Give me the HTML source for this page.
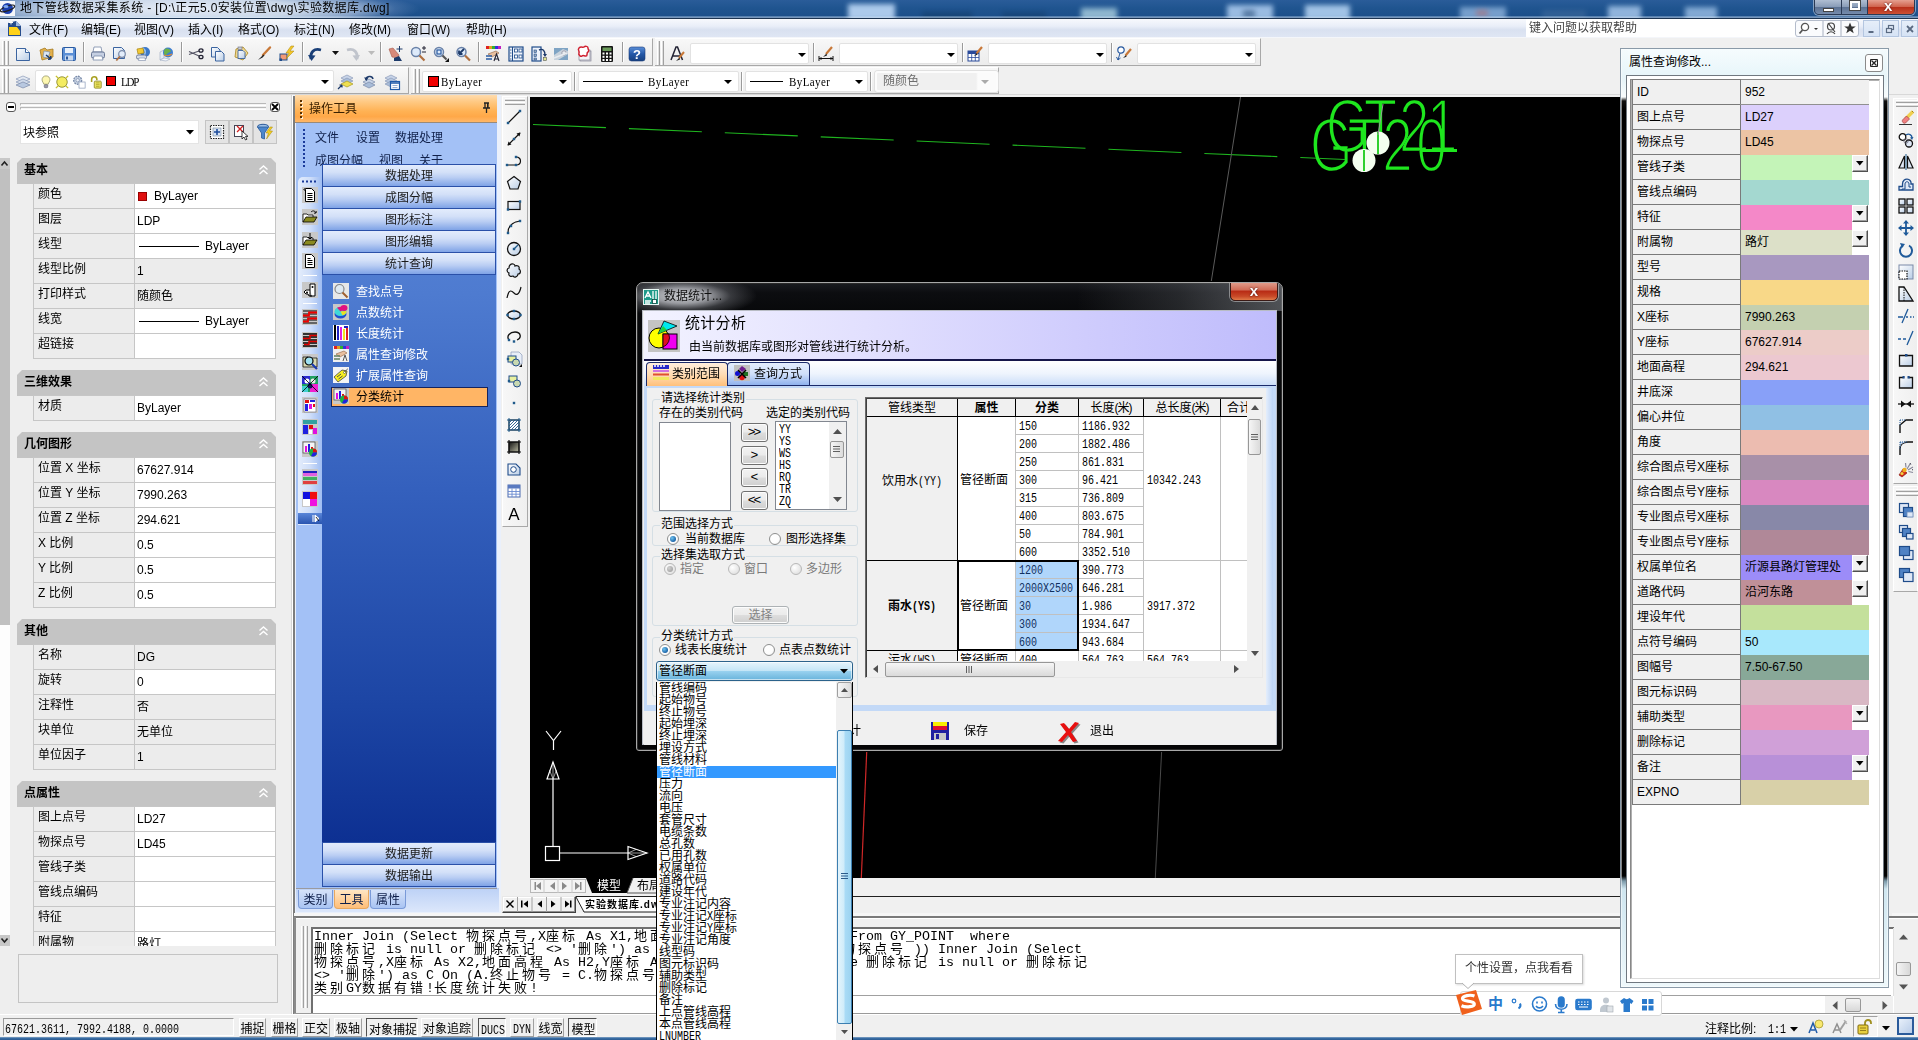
<!DOCTYPE html>
<html lang="zh-CN"><head><meta charset="utf-8"><title>地下管线数据采集系统</title>
<style>
*{box-sizing:border-box;margin:0;padding:0}
html,body{width:1918px;height:1040px;overflow:hidden;background:#f0f0f0}
body{font-family:"Liberation Sans","Noto Sans CJK SC",sans-serif;font-size:12px;color:#000;position:relative;line-height:1}
.a{position:absolute}
.t{position:absolute;white-space:nowrap;line-height:14px;height:14px}
.mono{font-family:"Liberation Mono","Noto Sans CJK SC",monospace}
.ser{font-family:"Liberation Serif","Noto Serif CJK SC",serif}
svg{position:absolute;overflow:visible}

.cmd{white-space:pre;font-family:"Liberation Mono","Noto Sans CJK SC",monospace;font-size:13.33px;line-height:13px;height:13px;color:#000}
.sss{font-family:"Liberation Serif",serif;font-size:11px;letter-spacing:.4px;transform:scale(1,1.12);transform-origin:0 60%}
.ssl{font-family:"Liberation Mono",monospace;font-size:10px;display:inline-block;transform:scale(1,1.2);transform-origin:0 60%;letter-spacing:0}
</style></head>
<body>
<svg width="0" height="0" style="position:absolute"><defs><linearGradient id="gdoc" x1="0" y1="0" x2="1" y2="1"><stop offset="0" stop-color="#ffffff"/><stop offset="1" stop-color="#b9cde6"/></linearGradient><linearGradient id="ghelp" x1="0" y1="0" x2="0" y2="1"><stop offset="0" stop-color="#5b8fd8"/><stop offset=".5" stop-color="#2458a8"/><stop offset="1" stop-color="#17407f"/></linearGradient></defs></svg>
<div class="a" id="titlebar" style="left:0;top:0;width:1918px;height:19px;background:linear-gradient(180deg,#2a5c99 0%,#1f548f 45%,#1b4d88 100%);overflow:hidden">
<div class="a" style="left:-60px;top:-10px;width:480px;height:38px;background:radial-gradient(ellipse 50% 60% at 50% 50%,rgba(236,241,250,.96) 0%,rgba(215,225,240,.92) 50%,rgba(170,190,220,.75) 75%,rgba(100,135,185,.4) 90%,rgba(40,90,150,0) 100%)"></div>
<div class="a" style="left:848px;top:4px;width:47px;height:16px;background:#b4d1f1;filter:blur(2.500px);opacity:0.95"></div>
<div class="a" style="left:922px;top:12px;width:50px;height:8px;background:#15406f;filter:blur(2.500px);opacity:0.7"></div>
<div class="a" style="left:1002px;top:12px;width:44px;height:8px;background:#15406f;filter:blur(2.500px);opacity:0.6"></div>
<div class="a" style="left:1081px;top:8px;width:36px;height:12px;background:#a3c9dc;filter:blur(2.500px);opacity:0.85"></div>
<div class="a" style="left:1227px;top:5px;width:46px;height:15px;background:#a8c8ec;filter:blur(2.500px);opacity:0.9"></div>
<div class="a" style="left:1243px;top:10px;width:12px;height:8px;background:#3a5f8a;filter:blur(2.500px);opacity:0.7"></div>
<div class="a" style="left:1305px;top:5px;width:45px;height:15px;background:#b0d0f0;filter:blur(2.500px);opacity:0.9"></div>
<div class="a" style="left:1460px;top:7px;width:46px;height:13px;background:#8db2dc;filter:blur(2.500px);opacity:0.8"></div>
<div class="a" style="left:1476px;top:10px;width:12px;height:6px;background:#b06a70;filter:blur(2.500px);opacity:0.6"></div>
<div class="a" style="left:1542px;top:10px;width:44px;height:9px;background:#3f6a9c;filter:blur(2.500px);opacity:0.6"></div>
<div class="a" style="left:1608px;top:6px;width:33px;height:14px;background:#a5c6ea;filter:blur(2.500px);opacity:0.85"></div>
<div class="a" style="left:1685px;top:7px;width:32px;height:13px;background:#9cc0e6;filter:blur(2.500px);opacity:0.8"></div>
<svg style="left:0;top:1px" width="16" height="15" viewBox="0 0 16 15"><rect x="0" y="0" width="15" height="15" fill="#f4f6fa"/><ellipse cx="7.5" cy="7.5" rx="5.5" ry="5.5" fill="#1a3fae"/><ellipse cx="7.5" cy="7.5" rx="7.5" ry="2.2" fill="none" stroke="#222" stroke-width="1.3" transform="rotate(-20 7.5 7.5)"/><ellipse cx="6" cy="5.5" rx="2.5" ry="1.6" fill="#7fa8f0"/></svg>
<div class="t" style="left:20px;top:1px;font-size:12px;line-height:15px;height:15px;color:#000;letter-spacing:.35px">地下管线数据采集系统 - [D:\正元5.0安装位置\dwg\实验数据库.dwg]</div>
<div class="a" style="left:1814px;top:-2px;width:101px;height:17px;border:1px solid #2a3a55;border-radius:0 0 5px 5px;box-shadow:0 0 0 1px rgba(255,255,255,.45);overflow:hidden"><div class="a" style="left:0;top:0;width:27px;height:17px;background:linear-gradient(180deg,#b5c3d6 0%,#8a9db8 45%,#5d7394 50%,#7d93b3 100%);border-right:1px solid #2a3a55"></div><div class="a" style="left:27px;top:0;width:26px;height:17px;background:linear-gradient(180deg,#b5c3d6 0%,#8a9db8 45%,#5d7394 50%,#7d93b3 100%);border-right:1px solid #2a3a55"></div><div class="a" style="left:53px;top:0;width:48px;height:17px;background:linear-gradient(180deg,#e8a99a 0%,#d0644e 45%,#b8301a 50%,#d25a3c 100%)"></div><div class="a" style="left:8px;top:9px;width:11px;height:4px;background:#fff;border:1px solid #444"></div><div class="a" style="left:35px;top:2px;width:10px;height:9px;border:2px solid #fff;outline:1px solid #444"></div><div class="t" style="left:69px;top:0px;font-weight:bold;font-size:15px;color:#fff;text-shadow:0 0 2px #400;line-height:14px">x</div></div>
<div class="a" style="left:0;top:16px;width:1918px;height:1px;background:rgba(200,225,245,.35)"></div><div class="a" style="left:0;top:17px;width:1918px;height:1px;background:rgba(230,240,250,.45)"></div><div class="a" style="left:0;top:18px;width:1918px;height:1px;background:#1b3350"></div>
</div>
<div class="a" id="menubar" style="left:0;top:19px;width:1918px;height:19px;background:linear-gradient(180deg,#f7f9fd 0%,#e9eef8 40%,#d9e1f0 60%,#dfe6f4 100%);border-bottom:1px solid #f4f6fa">
<svg style="left:7px;top:1px" width="15" height="17" viewBox="0 0 15 17"><path d="M1 3 L9 1 L14 6 L14 16 L1 16 Z" fill="#274d8c"/><path d="M2 7 L10 7 L13 11 L13 15 L2 15 Z" fill="#ffd21a"/><path d="M9 1 L14 6 L9 6Z" fill="#9bb6e0"/><path d="M2 2.5h4M4 .5v4" stroke="#fff" stroke-width="1"/></svg>
<div class="t" style="left:29px;top:4px">文件(F)</div>
<div class="t" style="left:81px;top:4px">编辑(E)</div>
<div class="t" style="left:134px;top:4px">视图(V)</div>
<div class="t" style="left:188px;top:4px">插入(I)</div>
<div class="t" style="left:238px;top:4px">格式(O)</div>
<div class="t" style="left:294px;top:4px">标注(N)</div>
<div class="t" style="left:349px;top:4px">修改(M)</div>
<div class="t" style="left:407px;top:4px">窗口(W)</div>
<div class="t" style="left:466px;top:4px">帮助(H)</div>
<div class="a" style="left:1526px;top:0px;width:270px;height:18px;background:#fff"></div>
<div class="t" style="left:1529px;top:2px;color:#444">键入问题以获取帮助</div>
<div class="a" style="left:1795px;top:1px;width:64px;height:17px;background:#fafbfd;border:1px solid #b4bccb;border-radius:3px"></div>
<svg style="left:1797px;top:2px" width="62" height="16" viewBox="0 0 62 16"><circle cx="8" cy="6" r="3.6" fill="#fff" stroke="#555" stroke-width="1.3"/><path d="M5.5 9 L2.5 12.5" stroke="#555" stroke-width="1.8"/><path d="M17 7h4l-2 2z" fill="#333"/><path d="M26 0v15M44 0v15" stroke="#a8b0c0" stroke-width="1"/><circle cx="34" cy="5.5" r="3.5" fill="none" stroke="#444" stroke-width="1.2"/><path d="M30 13c2-3 6-3 8 0M31 2l7 9" stroke="#444" stroke-width="1.2" fill="none"/><path d="M53 1.5l1.6 4h4.2l-3.4 2.6 1.3 4.2-3.7-2.6-3.7 2.6 1.3-4.2-3.4-2.6h4.2z" fill="#333"/></svg>
<div class="a" style="left:1863px;top:1px;width:17px;height:17px;background:linear-gradient(180deg,#e6eef9,#d6e3f5);border:1px solid #b4c6e0"></div>
<div class="a" style="left:1882px;top:1px;width:17px;height:17px;background:linear-gradient(180deg,#e6eef9,#d6e3f5);border:1px solid #b4c6e0"></div>
<div class="a" style="left:1901px;top:1px;width:17px;height:17px;background:linear-gradient(180deg,#e6eef9,#d6e3f5);border:1px solid #b4c6e0"></div>
<svg style="left:1863px;top:1px" width="56" height="17" viewBox="0 0 56 17"><path d="M5.500 12h5" stroke="#5a6a82" stroke-width="2"/><rect x="25.500" y="5.500" width="5" height="4" fill="none" stroke="#5a6a82" stroke-width="1.200"/><rect x="23.500" y="8.500" width="5" height="4" fill="#dfe8f6" stroke="#5a6a82" stroke-width="1.200"/><path d="M44 6l6 6M50 6l-6 6" stroke="#5a6a82" stroke-width="1.800"/></svg>
</div>
<div class="a" style="left:0;top:38px;width:1918px;height:57px;background:#f0f0f0"></div>
<div class="a" style="left:0px;top:38px;width:653px;height:28px;background:linear-gradient(180deg,#f8f8f8 0%,#f1f1f1 50%,#ececec 100%);border-top:1px solid #fff;border-bottom:1px solid #a8a8a8;border-right:1px solid #a8a8a8"></div>
<div class="a" style="left:2px;top:41px;width:3px;height:24px;border-left:1px solid #fff;border-right:1px solid #a0a0a0;background:#e0e0e0"></div><div class="a" style="left:6px;top:41px;width:3px;height:24px;border-left:1px solid #fff;border-right:1px solid #a0a0a0;background:#e0e0e0"></div>
<svg style="left:15px;top:45.5px" width="16" height="16" viewBox="0 0 16 16"><path d="M1.500 2.500h9l4 4v8h-13z" fill="url(#gdoc)" stroke="#3b64a0"/><path d="M10.500 2.500v4h4" fill="#fff" stroke="#3b64a0"/></svg>
<svg style="left:39px;top:45.5px" width="16" height="16" viewBox="0 0 16 16"><path d="M1 4l5-2 2 2 6-1v8l-11 3z" fill="#e3b04b" stroke="#a57a20" stroke-width=".8"/><path d="M5 5l6 1-2 6-5-1z" fill="#dbe6f2" stroke="#6b87a8" stroke-width=".6"/><path d="M7 9l5 4M12 13l-3 .3M12 13l-.3-3" stroke="#1d3a6a" stroke-width="1.5" fill="none"/></svg>
<svg style="left:61px;top:45.5px" width="16" height="16" viewBox="0 0 16 16"><rect x="1.500" y="1.500" width="13" height="13" rx="1" fill="#5b8fd6" stroke="#2a5aa0"/><rect x="4" y="2" width="8" height="5" fill="#e8f0fa"/><rect x="4" y="9.500" width="8" height="5" fill="#c8d8ee"/><rect x="5" y="10.500" width="2" height="3" fill="#2a5aa0"/></svg>
<div class="a" style="left:83px;top:42px;width:2px;height:20px;border-left:1px solid #9a9a9a;border-right:1px solid #fff"></div>
<svg style="left:90px;top:45.5px" width="16" height="16" viewBox="0 0 16 16"><path d="M4 1h7l1 5H3z" fill="#fff" stroke="#7a8aa8" stroke-width=".8"/><rect x="1.500" y="6" width="13" height="6" rx="1.500" fill="#c5cfe2" stroke="#5a6a8a" stroke-width=".9"/><path d="M4 10h8l1 4H3z" fill="#fff" stroke="#7a8aa8" stroke-width=".8"/></svg>
<svg style="left:112px;top:45.5px" width="16" height="16" viewBox="0 0 16 16"><path d="M1.500 1.500h8l3 3v8h-11z" fill="url(#gdoc)" stroke="#3b64a0"/><circle cx="10" cy="8" r="3.300" fill="#e4eefb" stroke="#7a8aa8" stroke-width="1.200"/><path d="M7.800 10.500l-3.500 4" stroke="#b07040" stroke-width="1.800"/></svg>
<svg style="left:135px;top:45.5px" width="16" height="16" viewBox="0 0 16 16"><circle cx="10" cy="6" r="5" fill="#3c78c8"/><path d="M8 2c3 2 3 6 0 9" fill="none" stroke="#9cc4f0" stroke-width="1.500"/><path d="M2 3l6-1 1 5-6 1z" fill="#f2c834" stroke="#a88410" stroke-width=".7"/><rect x="1.500" y="9" width="10" height="4" rx="1.500" fill="#d5dcea" stroke="#5a6a8a" stroke-width=".8"/><path d="M4 12h6l.5 2.500h-7z" fill="#fff" stroke="#7a8aa8" stroke-width=".6"/></svg>
<svg style="left:158px;top:45.5px" width="16" height="16" viewBox="0 0 16 16"><path d="M2 6l4-2v8l-4 2z" fill="#e6ecf5" stroke="#9aa8c0" stroke-width=".6"/><path d="M2 14l4-2 6 1-4 2z" fill="#f4f6fa" stroke="#9aa8c0" stroke-width=".6"/><circle cx="10" cy="6.500" r="5" fill="#3f7fd0"/><path d="M7 3c2-1 5 0 6 2-1 2-3 1-4 3s-3 1-3-1 0-3 1-4z" fill="#6bb04a"/><path d="M6 9c2 1 5 1 8-1" stroke="#e0883a" stroke-width="1.200" fill="none"/></svg>
<div class="a" style="left:181px;top:42px;width:2px;height:20px;border-left:1px solid #9a9a9a;border-right:1px solid #fff"></div>
<svg style="left:188px;top:45.5px" width="16" height="16" viewBox="0 0 16 16"><path d="M1 5.500l10 4.500M1 8.500l10-3.500" stroke="#556" stroke-width="1.100"/><ellipse cx="13" cy="4.500" rx="2" ry="1.700" fill="none" stroke="#223" stroke-width="1.300"/><ellipse cx="13" cy="11" rx="2" ry="1.700" fill="none" stroke="#223" stroke-width="1.300"/></svg>
<svg style="left:210px;top:45.5px" width="16" height="16" viewBox="0 0 16 16"><path d="M1.500 1.500h6l2.500 2.500v7h-8.500z" fill="url(#gdoc)" stroke="#3b64a0"/><path d="M5.500 5.500h6l2.500 2.500v7h-8.500z" fill="url(#gdoc)" stroke="#3b64a0"/></svg>
<svg style="left:233px;top:45.5px" width="16" height="16" viewBox="0 0 16 16"><path d="M3 3l7-2 5 6-5 7-8-3z" fill="#f0d890" stroke="#b09030" stroke-width=".9"/><path d="M5 4.500h5l2 2v6H5z" fill="url(#gdoc)" stroke="#3b64a0" stroke-width=".9"/><rect x="5" y="1" width="4" height="2.500" fill="#c8d0dc" stroke="#667" stroke-width=".6"/></svg>
<svg style="left:256px;top:45.5px" width="16" height="16" viewBox="0 0 16 16"><path d="M14 1.500L7 9" stroke="#c87838" stroke-width="2.400" stroke-linecap="round"/><path d="M7.500 8.500L2 14l4.500-2.500 2-2z" fill="#222"/></svg>
<svg style="left:279px;top:45.5px" width="16" height="16" viewBox="0 0 16 16"><rect x="1" y="8" width="7" height="6" fill="#f29a76" stroke="#1f4c8a" stroke-width="1"/><rect x=".5" y="12.500" width="2.500" height="2.500" fill="#1f4c8a"/><path d="M12 0l-5 7h3l-3 6 8-8h-4l4-5z" fill="#f5c828" stroke="#a88410" stroke-width=".5"/></svg>
<div class="a" style="left:302px;top:42px;width:2px;height:20px;border-left:1px solid #9a9a9a;border-right:1px solid #fff"></div>
<svg style="left:308px;top:45.5px" width="16" height="16" viewBox="0 0 16 16"><path d="M3 13c-1-7 3-11 10-9" fill="none" stroke="#1a3f78" stroke-width="2.800"/><path d="M0 9l3.500 6 4-5.500z" fill="#1a3f78"/></svg>
<svg style="left:332px;top:51px" width="7" height="4" viewBox="0 0 7 4"><path d="M0 0h7l-3.5 4z" fill="#111"/></svg>
<svg style="left:344px;top:45.5px" width="16" height="16" viewBox="0 0 16 16"><path d="M13 13c1-7-3-11-10-9" fill="none" stroke="#c0c4cc" stroke-width="2.800" transform="translate(0,0)"/><path d="M16 9l-3.500 6-4-5.500z" fill="#c0c4cc"/></svg>
<svg style="left:368px;top:51px" width="7" height="4" viewBox="0 0 7 4"><path d="M0 0h7l-3.5 4z" fill="#bbb"/></svg>
<div class="a" style="left:380px;top:42px;width:2px;height:20px;border-left:1px solid #9a9a9a;border-right:1px solid #fff"></div>
<svg style="left:387px;top:45.5px" width="16" height="16" viewBox="0 0 16 16"><path d="M2 3l3 8 6 1 1-3-6-7z" fill="#d88a7a" stroke="#a85a4a" stroke-width=".6"/><path d="M7 12l5-2 3 5H7z" fill="#1d3a6a"/><path d="M12.500 0v6M9.500 3h6" stroke="#1d3a6a" stroke-width="1"/></svg>
<svg style="left:410px;top:45.5px" width="16" height="16" viewBox="0 0 16 16"><circle cx="6" cy="6" r="4.500" fill="#ddeafa" stroke="#6a82a8" stroke-width="1.500"/><path d="M9.500 9.500l5 5" stroke="#b07040" stroke-width="2.200"/><path d="M12 2h4M14 0v4M12 6h4" stroke="#223" stroke-width="1"/></svg>
<svg style="left:433px;top:45.5px" width="16" height="16" viewBox="0 0 16 16"><circle cx="6" cy="6" r="4.500" fill="#ddeafa" stroke="#6a82a8" stroke-width="1.500"/><rect x="4" y="4" width="4" height="4" fill="none" stroke="#2a5aa0" stroke-width="1.200"/><path d="M9.500 9.500l4 4" stroke="#555" stroke-width="2.200"/><path d="M16 12v4h-4z" fill="#111"/></svg>
<svg style="left:455px;top:45.5px" width="16" height="16" viewBox="0 0 16 16"><circle cx="6.500" cy="6" r="4.500" fill="#ddeafa" stroke="#6a82a8" stroke-width="1.500"/><path d="M4 8l5-5M4 8V4.500M4 8h3.500" stroke="#1d3a6a" stroke-width="1.800" fill="none"/><path d="M10 9.500l5 5" stroke="#b07040" stroke-width="2.200"/></svg>
<div class="a" style="left:478px;top:42px;width:2px;height:20px;border-left:1px solid #9a9a9a;border-right:1px solid #fff"></div>
<svg style="left:485px;top:45.5px" width="16" height="16" viewBox="0 0 16 16"><rect x="1" y="0" width="3" height="3" fill="#e02020"/><rect x="4" y="0" width="3" height="3" fill="#e0a020"/><rect x="7" y="0" width="3" height="3" fill="#30b030"/><rect x="10" y="0" width="3" height="3" fill="#3030e0"/><rect x="13" y="0" width="3" height="3" fill="#c020c0"/><path d="M3 8l8-3 3 2-7 4z" fill="#e8c0a0" stroke="#906040" stroke-width=".6"/><path d="M1 10h6M1 13h6" stroke="#2a5aa0" stroke-width="1.400"/><path d="M9 15l2.500-7 2.500 7M10 13h3" stroke="#223" stroke-width="1.100" fill="none"/></svg>
<svg style="left:508px;top:45.5px" width="16" height="16" viewBox="0 0 16 16"><rect x="1" y="1" width="14" height="14" fill="#eef3fb" stroke="#1f4c8a" stroke-width="1.200"/><path d="M4.500 1v14" stroke="#1f4c8a" stroke-width="1"/><rect x="6.500" y="3" width="3" height="3" fill="#fff" stroke="#1f4c8a" stroke-width=".8"/><rect x="11" y="3" width="3" height="3" fill="#fff" stroke="#1f4c8a" stroke-width=".8"/><rect x="6.500" y="9" width="3" height="3" fill="#fff" stroke="#1f4c8a" stroke-width=".8"/><rect x="11" y="9" width="3" height="3" fill="#fff" stroke="#1f4c8a" stroke-width=".8"/><path d="M2 4h1.500M2 7h1.500M2 10h1.500M2 13h1.500" stroke="#1f4c8a" stroke-width=".8"/></svg>
<svg style="left:531px;top:45.5px" width="16" height="16" viewBox="0 0 16 16"><rect x="1" y="1" width="9" height="14" fill="#eef3fb" stroke="#1f4c8a" stroke-width="1.200"/><rect x="3" y="4" width="2.500" height="2.500" fill="#9ab" stroke="#1f4c8a" stroke-width=".6"/><rect x="3" y="8" width="2.500" height="2.500" fill="#9ab" stroke="#1f4c8a" stroke-width=".6"/><rect x="3" y="12" width="2.500" height="2" fill="#9ab" stroke="#1f4c8a" stroke-width=".6"/><path d="M8 4c4-2 6 1 6 5" stroke="#1d3a6a" stroke-width="1.400" fill="none"/><path d="M12 8h4l-2 3z" fill="#1d3a6a"/><rect x="12.500" y="11.500" width="3" height="3" fill="#dfe890" stroke="#555" stroke-width=".6"/></svg>
<svg style="left:553px;top:45.5px" width="16" height="16" viewBox="0 0 16 16"><rect x="1" y="2" width="14" height="12" fill="#7fa4c4"/><path d="M1 9l9-6 5 2v3L5 14H1z" fill="#c8d2dc"/><circle cx="11" cy="7" r="2.200" fill="#e8ecf0" stroke="#889" stroke-width=".7"/><path d="M1 12l13-5" stroke="#e8ecf0" stroke-width="1.500"/></svg>
<svg style="left:576px;top:45.5px" width="16" height="16" viewBox="0 0 16 16"><rect x="4" y="5" width="11" height="10" fill="#e4e4e8" stroke="#889" stroke-width=".7"/><rect x="3" y="4" width="11" height="10" fill="#f4f4f8" stroke="#889" stroke-width=".7"/><path d="M3 2c2-2 4 0 5-1s4-1 4 1 2 3 0 4 0 4-2 4-3-1-4 0-4-1-3-3-2-3 0-5z" fill="#fff" stroke="#d02030" stroke-width="1.500"/></svg>
<svg style="left:599px;top:45.5px" width="16" height="16" viewBox="0 0 16 16"><rect x="2" y="0" width="12" height="16" rx="1" fill="#151515"/><rect x="3.500" y="1.500" width="9" height="3.500" fill="#6a9a5a"/><g fill="#fff"><rect x="3.500" y="6.500" width="2" height="2"/><rect x="7" y="6.500" width="2" height="2"/><rect x="10.500" y="6.500" width="2" height="2"/><rect x="3.500" y="9.800" width="2" height="2"/><rect x="7" y="9.800" width="2" height="2"/><rect x="10.500" y="9.800" width="2" height="2"/><rect x="3.500" y="13" width="2" height="2"/><rect x="7" y="13" width="2" height="2"/><rect x="10.500" y="13" width="2" height="2"/></g></svg>
<div class="a" style="left:622px;top:42px;width:2px;height:20px;border-left:1px solid #9a9a9a;border-right:1px solid #fff"></div>
<svg style="left:629px;top:45.5px" width="16" height="16" viewBox="0 0 16 16"><rect x="0" y="1" width="16" height="14" rx="2.500" fill="url(#ghelp)" stroke="#173a78" stroke-width=".6"/><text x="8" y="13" font-size="13" font-weight="bold" fill="#fff" text-anchor="middle" font-family="Liberation Sans,sans-serif">?</text></svg>
<div class="a" style="left:655px;top:38px;width:606px;height:28px;background:linear-gradient(180deg,#f8f8f8 0%,#f1f1f1 50%,#ececec 100%);border-top:1px solid #fff;border-bottom:1px solid #a8a8a8;border-right:1px solid #a8a8a8"></div>
<div class="a" style="left:657px;top:41px;width:3px;height:24px;border-left:1px solid #fff;border-right:1px solid #a0a0a0;background:#e0e0e0"></div><div class="a" style="left:661px;top:41px;width:3px;height:24px;border-left:1px solid #fff;border-right:1px solid #a0a0a0;background:#e0e0e0"></div>
<svg style="left:669px;top:45.5px" width="16" height="16" viewBox="0 0 16 16"><path d="M2 14L7 1h1.500l5 13M4 10h8" stroke="#223" stroke-width="1.500" fill="none"/><path d="M15 6l-5 6" stroke="#c87838" stroke-width="2"/><path d="M10.500 11.500L7 15l4-1.500z" fill="#222"/></svg>
<div class="a" style="left:690px;top:43px;width:119px;height:21px;background:#fff;border:1px solid #e2e2e2;border-radius:2px"></div>
<svg style="left:798px;top:53px" width="8" height="4" viewBox="0 0 8 4"><path d="M0 0h8l-4.0 4z" fill="#000"/></svg>
<div class="a" style="left:813px;top:43px;width:2px;height:19px;border-left:1px solid #9a9a9a;border-right:1px solid #fff"></div>
<svg style="left:818px;top:45.5px" width="16" height="16" viewBox="0 0 16 16"><path d="M1 10v5M15 10v5M1 12.500h14" stroke="#111" stroke-width="1"/><path d="M1 12.500l2.500-1.500v3zM15 12.500l-2.500-1.500v3z" fill="#111"/><path d="M14 1L8 8" stroke="#c87838" stroke-width="2.200"/><path d="M8.500 7.500L5 11l4-1.500z" fill="#222"/></svg>
<div class="a" style="left:839px;top:43px;width:119px;height:21px;background:#fff;border:1px solid #e2e2e2;border-radius:2px"></div>
<svg style="left:947px;top:53px" width="8" height="4" viewBox="0 0 8 4"><path d="M0 0h8l-4.0 4z" fill="#000"/></svg>
<div class="a" style="left:962px;top:43px;width:2px;height:19px;border-left:1px solid #9a9a9a;border-right:1px solid #fff"></div>
<svg style="left:967px;top:45.5px" width="16" height="16" viewBox="0 0 16 16"><rect x="1" y="5" width="11" height="10" fill="#fff" stroke="#2a4a9a" stroke-width="1"/><rect x="1" y="5" width="11" height="3" fill="#2a4a9a"/><path d="M1 11.500h11M4.700 8v7M8.300 8v7" stroke="#2a4a9a" stroke-width=".8"/><path d="M15 1L9.500 7.500" stroke="#c87838" stroke-width="2.200"/><path d="M10 7L7 10l3.500-1.200z" fill="#222"/></svg>
<div class="a" style="left:988px;top:43px;width:119px;height:21px;background:#fff;border:1px solid #e2e2e2;border-radius:2px"></div>
<svg style="left:1096px;top:53px" width="8" height="4" viewBox="0 0 8 4"><path d="M0 0h8l-4.0 4z" fill="#000"/></svg>
<div class="a" style="left:1111px;top:43px;width:2px;height:19px;border-left:1px solid #9a9a9a;border-right:1px solid #fff"></div>
<svg style="left:1116px;top:45.5px" width="16" height="16" viewBox="0 0 16 16"><circle cx="5" cy="4" r="3.200" fill="#fff" stroke="#2a5aa0" stroke-width="1.200"/><path d="M4 7l-2 7M2 14l-1.500-3M2 14l2.500-2" stroke="#2a5aa0" stroke-width="1" fill="none"/><path d="M15 3L9.500 9.500" stroke="#c87838" stroke-width="2.200"/><path d="M10 9L7 12l3.500-1.200z" fill="#222"/></svg>
<div class="a" style="left:1137px;top:43px;width:119px;height:21px;background:#fff;border:1px solid #e2e2e2;border-radius:2px"></div>
<svg style="left:1245px;top:53px" width="8" height="4" viewBox="0 0 8 4"><path d="M0 0h8l-4.0 4z" fill="#000"/></svg>
<div class="a" style="left:0px;top:67px;width:409px;height:27px;background:linear-gradient(180deg,#f8f8f8 0%,#f1f1f1 50%,#ececec 100%);border-top:1px solid #fff;border-bottom:1px solid #a8a8a8;border-right:1px solid #a8a8a8"></div>
<div class="a" style="left:2px;top:69px;width:3px;height:24px;border-left:1px solid #fff;border-right:1px solid #a0a0a0;background:#e0e0e0"></div><div class="a" style="left:6px;top:69px;width:3px;height:24px;border-left:1px solid #fff;border-right:1px solid #a0a0a0;background:#e0e0e0"></div>
<svg style="left:15px;top:74px" width="16" height="16" viewBox="0 0 16 16"><path d="M1 5l7-3 7 3-7 3z" fill="#e3e9f2" stroke="#8a9ab8" stroke-width=".7"/><path d="M1 8l7-3 7 3-7 3z" fill="#d0daea" stroke="#8a9ab8" stroke-width=".7"/><path d="M1 11l7-3 7 3-7 3z" fill="#b8c8e0" stroke="#7a8aa8" stroke-width=".7"/></svg>
<div class="a" style="left:35px;top:70px;width:299px;height:22px;background:#fff;border:1px solid #e2e2e2;border-radius:2px"></div>
<svg style="left:39px;top:75px" width="14" height="14" viewBox="0 0 16 16"><path d="M8 1c3 0 4.500 2.200 4.500 4.500 0 2-1.500 3-2 5h-5c-.5-2-2-3-2-5C3.500 3.200 5 1 8 1z" fill="#fdf7b0" stroke="#8a8a5a" stroke-width=".8"/><rect x="6" y="11" width="4" height="3.500" rx="1" fill="#99a" stroke="#556" stroke-width=".6"/></svg>
<svg style="left:55px;top:75px" width="14" height="14" viewBox="0 0 16 16"><path d="M1 1l3 3M15 1l-3 3M1 15l3-3M15 15l-3-3" stroke="#c8c030" stroke-width="1.500"/><circle cx="8" cy="8" r="6" fill="#f4ec60" stroke="#8a8a30" stroke-width="1"/></svg>
<svg style="left:72px;top:75px" width="14" height="14" viewBox="0 0 16 16"><circle cx="6.500" cy="6" r="4.500" fill="#c8d4e4" stroke="#7a8aa8" stroke-width="1.600" stroke-dasharray="2 1"/><circle cx="6.500" cy="6" r="2" fill="#e8eef8" stroke="#7a8aa8" stroke-width=".8"/><rect x="8" y="8" width="7" height="7" fill="#fff" stroke="#8a9ab8" stroke-width=".8"/></svg>
<svg style="left:89px;top:75px" width="14" height="14" viewBox="0 0 16 16"><path d="M3 8V5c0-4 6-4 6 0v1" fill="none" stroke="#a8a020" stroke-width="1.800"/><rect x="6" y="7" width="8" height="8" rx="1" fill="#e8e060" stroke="#8a8420" stroke-width=".9"/><path d="M8 9h4M8 11h4M8 13h4" stroke="#a8a020" stroke-width=".8"/></svg>
<div class="a" style="left:106px;top:76px;width:10px;height:10px;background:#f00000;border:1px solid #000"></div>
<div class="t sss" style="left:121px;top:75px;letter-spacing:-1.200px">LDP</div>
<svg style="left:321px;top:80px" width="8" height="4" viewBox="0 0 8 4"><path d="M0 0h8l-4.0 4z" fill="#000"/></svg>
<svg style="left:338px;top:74px" width="16" height="16" viewBox="0 0 16 16"><path d="M3 4l6-3 6 3-6 3z" fill="#c8d4e8" stroke="#8a9ab8" stroke-width=".7"/><path d="M3 7l6-3 6 3-6 3z" fill="#a8bcd8" stroke="#8a9ab8" stroke-width=".7"/><path d="M3 10l6-3 6 3-6 3z" fill="#f0e050" stroke="#a89a20" stroke-width=".7"/><path d="M0 15l4-4M4 11H1.500M4 11v2.500" stroke="#1d3a6a" stroke-width="1.200" fill="none"/></svg>
<svg style="left:361px;top:74px" width="16" height="16" viewBox="0 0 16 16"><path d="M2 8l6-3 6 3-6 3z" fill="#c8d4e8" stroke="#7a8aa8" stroke-width=".7"/><path d="M2 11l6-3 6 3-6 3z" fill="#a8bcd8" stroke="#7a8aa8" stroke-width=".7"/><path d="M5 6c0-4 6-5 7-1" fill="none" stroke="#1d3a6a" stroke-width="1.600"/><path d="M3 3.500l2.500 3.500 2-3.500z" fill="#1d3a6a"/></svg>
<svg style="left:384px;top:74px" width="16" height="16" viewBox="0 0 16 16"><path d="M1 4l6-3 6 3-6 3z" fill="#c8d4e8" stroke="#8a9ab8" stroke-width=".7"/><path d="M1 7l6-3 6 3-6 3z" fill="#b8c8e0" stroke="#8a9ab8" stroke-width=".7"/><path d="M1 10l6-3 6 3-6 3z" fill="#a8bcd8" stroke="#8a9ab8" stroke-width=".7"/><rect x="6.500" y="7.500" width="9" height="8" fill="#fff" stroke="#1f5aa8" stroke-width="1.200"/><path d="M6.500 9h9" stroke="#1f5aa8" stroke-width="1.500"/><path d="M8.500 11.500h5M8.500 13.500h5" stroke="#7a9ac8" stroke-width=".8"/></svg>
<div class="a" style="left:411px;top:67px;width:588px;height:27px;background:linear-gradient(180deg,#f8f8f8 0%,#f1f1f1 50%,#ececec 100%);border-top:1px solid #fff;border-bottom:1px solid #a8a8a8;border-right:1px solid #a8a8a8"></div>
<div class="a" style="left:413px;top:69px;width:3px;height:24px;border-left:1px solid #fff;border-right:1px solid #a0a0a0;background:#e0e0e0"></div><div class="a" style="left:417px;top:69px;width:3px;height:24px;border-left:1px solid #fff;border-right:1px solid #a0a0a0;background:#e0e0e0"></div>
<div class="a" style="left:422px;top:71px;width:150px;height:21px;background:#fff;border:1px solid #e2e2e2;border-radius:2px"></div>
<div class="a" style="left:428px;top:76px;width:11px;height:11px;background:#f00000;border:1px solid #000"></div>
<div class="t sss" style="left:441px;top:75px">ByLayer</div>
<svg style="left:559px;top:80px" width="8" height="4" viewBox="0 0 8 4"><path d="M0 0h8l-4.0 4z" fill="#000"/></svg>
<div class="a" style="left:574px;top:72px;width:2px;height:19px;border-left:1px solid #9a9a9a;border-right:1px solid #fff"></div>
<div class="a" style="left:578px;top:71px;width:161px;height:21px;background:#fff;border:1px solid #e2e2e2;border-radius:2px"></div>
<div class="a" style="left:583px;top:81px;width:60px;height:1px;background:#000"></div>
<div class="t sss" style="left:648px;top:75px">ByLayer</div>
<svg style="left:724px;top:80px" width="8" height="4" viewBox="0 0 8 4"><path d="M0 0h8l-4.0 4z" fill="#000"/></svg>
<div class="a" style="left:741px;top:72px;width:2px;height:19px;border-left:1px solid #9a9a9a;border-right:1px solid #fff"></div>
<div class="a" style="left:745px;top:71px;width:123px;height:21px;background:#fff;border:1px solid #e2e2e2;border-radius:2px"></div>
<div class="a" style="left:750px;top:81px;width:33px;height:1px;background:#000"></div>
<div class="t sss" style="left:789px;top:75px">ByLayer</div>
<svg style="left:855px;top:80px" width="8" height="4" viewBox="0 0 8 4"><path d="M0 0h8l-4.0 4z" fill="#000"/></svg>
<div class="a" style="left:870px;top:72px;width:2px;height:19px;border-left:1px solid #9a9a9a;border-right:1px solid #fff"></div>
<div class="a" style="left:875px;top:71px;width:123px;height:21px;background:linear-gradient(90deg,#f0f0f0 0,#f0f0f0 99px,#fbfbfb 101px);border:2px solid #fcfcfc;border-radius:3px;box-shadow:0 0 0 1px #e0e0e0"></div>
<div class="t" style="left:883px;top:74px;color:#6d6d6d">随颜色</div>
<svg style="left:981px;top:80px" width="8" height="4" viewBox="0 0 8 4"><path d="M0 0h8l-4.0 4z" fill="#aaa"/></svg>
<div class="a" style="left:0;top:94px;width:1918px;height:1px;background:#d8d8d8"></div>
<div class="a" id="leftpanel" style="left:0;top:95px;width:293px;height:921px;background:#eeeeee;overflow:hidden">
<div class="a" style="left:6px;top:7px;width:10px;height:10px;border:1px solid #555;border-radius:3px;background:#fff"></div><div class="a" style="left:8px;top:11px;width:6px;height:2px;background:#000"></div>
<div class="a" style="left:20px;top:8px;width:246px;height:3px;border:1px solid #b8b8b8;border-bottom-color:#fff;border-right:none;background:#f4f4f4"></div>
<div class="a" style="left:20px;top:12px;width:246px;height:3px;border:1px solid #b8b8b8;border-bottom-color:#fff;border-right:none;background:#f4f4f4"></div>
<div class="a" style="left:270px;top:7px;width:10px;height:10px;border:1px solid #555;border-radius:3px;background:#fff"></div><svg style="left:272px;top:9px" width="6" height="6" viewBox="0 0 6 6"><path d="M0 0l6 6M6 0l-6 6" stroke="#000" stroke-width="1.800"/></svg>
<div class="a" style="left:20px;top:25px;width:179px;height:24px;background:#fff;border:1px solid #e4e4e4"></div>
<div class="t" style="left:23px;top:31px">块参照</div>
<svg style="left:186px;top:35px" width="8" height="5" viewBox="0 0 8 5"><path d="M0 0h8l-4 4.500z" fill="#000"/></svg>
<div class="a" style="left:205px;top:25px;width:24px;height:24px;background:#e4e4e4;border:1px solid #c4c4c4"></div>
<div class="a" style="left:229px;top:25px;width:24px;height:24px;background:#e4e4e4;border:1px solid #c4c4c4"></div>
<div class="a" style="left:253px;top:25px;width:24px;height:24px;background:#e4e4e4;border:1px solid #c4c4c4"></div>
<svg style="left:208px;top:28px" width="18" height="18" viewBox="0 0 18 18"><rect x="2.500" y="2.500" width="13" height="13" fill="#fff" stroke="#222" stroke-width="1.200" stroke-dasharray="1.500 1"/><rect x="5" y="5" width="8" height="8" fill="#d8e4f4" stroke="#789" stroke-width=".6"/><path d="M9 6v6M6 9h6" stroke="#1f4c9a" stroke-width="1.600"/></svg>
<svg style="left:232px;top:28px" width="18" height="18" viewBox="0 0 18 18"><rect x="2.500" y="2.500" width="9" height="11" fill="#fff" stroke="#445" stroke-width="1"/><path d="M5 3l6 6M11 3l-6 6" stroke="#d02020" stroke-width="1.300"/><path d="M10 8v8l2-2 1.500 3 1.500-.8-1.500-2.800h2.500z" fill="#fff" stroke="#111" stroke-width=".8"/></svg>
<svg style="left:256px;top:28px" width="18" height="18" viewBox="0 0 18 18"><ellipse cx="7" cy="3.500" rx="5.500" ry="2.200" fill="#9cc0e8" stroke="#2a5a9a" stroke-width="1"/><path d="M1.500 4l4 6v5l3 1V10l4-6z" fill="#4a86cc" stroke="#2a5a9a" stroke-width=".8"/><path d="M14 4l-4 6h2.500l-2 6 6-8h-3l3-4z" fill="#f5d020" stroke="#a08410" stroke-width=".5"/></svg>
<div class="a" style="left:0;top:63px;width:10px;height:467px;background:#c0c0c0"></div>
<div class="a" style="left:0;top:63px;width:10px;height:11px;background:#c8c8c8"></div>
<svg style="left:1px;top:66px" width="7" height="5" viewBox="0 0 7 5"><path d="M.5 4.500l3-3.500 3 3.500" fill="none" stroke="#222" stroke-width="1.600"/></svg>
<div class="a" style="left:0;top:530px;width:10px;height:321px;background:#fdfdfd"></div>
<div class="a" style="left:0;top:840px;width:10px;height:11px;background:#c8c8c8"></div>
<svg style="left:1px;top:843px" width="7" height="5" viewBox="0 0 7 5"><path d="M.5 .5l3 3.500 3-3.500" fill="none" stroke="#222" stroke-width="1.600"/></svg>
<div class="a" style="left:10px;top:55px;width:283px;height:796px;overflow:hidden">
<div class="a" style="left:7px;top:8px;width:259px;height:26px;background:#c4c4c4;clip-path:polygon(5px 0,254px 0,259px 5px,259px 26px,0 26px,0 5px)"></div>
<div class="t" style="left:14px;top:12px;font-weight:bold;line-height:16px;height:16px">基本</div>
<svg style="left:249px;top:15px" width="9" height="10" viewBox="0 0 9 10"><path d="M.5 4.500l4-3.500 4 3.500M.5 9l4-3.500 4 3.500" fill="none" stroke="#fff" stroke-width="1.400"/></svg>
<div class="a" style="left:23px;top:33px;width:243px;height:176px;background:#c6c6c6"></div>
<div class="a" style="left:24px;top:34px;width:100px;height:24px;background:#ececec"></div>
<div class="a" style="left:125px;top:34px;width:140px;height:24px;background:#fff"></div>
<div class="t" style="left:28px;top:36px;line-height:16px;height:16px">颜色</div>
<div class="a" style="left:128px;top:42px;width:9px;height:9px;background:#e01010;border:1px solid #900"></div>
<div class="t" style="left:144px;top:38px;line-height:16px;height:16px">ByLayer</div>
<div class="a" style="left:24px;top:59px;width:100px;height:24px;background:#ececec"></div>
<div class="a" style="left:125px;top:59px;width:140px;height:24px;background:#fff"></div>
<div class="t" style="left:28px;top:61px;line-height:16px;height:16px">图层</div>
<div class="t" style="left:127px;top:63px;line-height:16px;height:16px">LDP</div>
<div class="a" style="left:24px;top:84px;width:100px;height:24px;background:#ececec"></div>
<div class="a" style="left:125px;top:84px;width:140px;height:24px;background:#fff"></div>
<div class="t" style="left:28px;top:86px;line-height:16px;height:16px">线型</div>
<div class="a" style="left:129px;top:96px;width:60px;height:1px;background:#000"></div>
<div class="t" style="left:195px;top:88px;line-height:16px;height:16px">ByLayer</div>
<div class="a" style="left:24px;top:109px;width:100px;height:24px;background:#ececec"></div>
<div class="a" style="left:125px;top:109px;width:140px;height:24px;background:#ececec"></div>
<div class="t" style="left:28px;top:111px;line-height:16px;height:16px">线型比例</div>
<div class="t" style="left:127px;top:113px;line-height:16px;height:16px">1</div>
<div class="a" style="left:24px;top:134px;width:100px;height:24px;background:#ececec"></div>
<div class="a" style="left:125px;top:134px;width:140px;height:24px;background:#ececec"></div>
<div class="t" style="left:28px;top:136px;line-height:16px;height:16px">打印样式</div>
<div class="t" style="left:127px;top:138px;line-height:16px;height:16px">随颜色</div>
<div class="a" style="left:24px;top:159px;width:100px;height:24px;background:#ececec"></div>
<div class="a" style="left:125px;top:159px;width:140px;height:24px;background:#fff"></div>
<div class="t" style="left:28px;top:161px;line-height:16px;height:16px">线宽</div>
<div class="a" style="left:129px;top:171px;width:60px;height:1px;background:#000"></div>
<div class="t" style="left:195px;top:163px;line-height:16px;height:16px">ByLayer</div>
<div class="a" style="left:24px;top:184px;width:100px;height:24px;background:#ececec"></div>
<div class="a" style="left:125px;top:184px;width:140px;height:24px;background:#fff"></div>
<div class="t" style="left:28px;top:186px;line-height:16px;height:16px">超链接</div>
<div class="a" style="left:7px;top:220px;width:259px;height:26px;background:#c4c4c4;clip-path:polygon(5px 0,254px 0,259px 5px,259px 26px,0 26px,0 5px)"></div>
<div class="t" style="left:14px;top:224px;font-weight:bold;line-height:16px;height:16px">三维效果</div>
<svg style="left:249px;top:227px" width="9" height="10" viewBox="0 0 9 10"><path d="M.5 4.500l4-3.500 4 3.500M.5 9l4-3.500 4 3.500" fill="none" stroke="#fff" stroke-width="1.400"/></svg>
<div class="a" style="left:23px;top:245px;width:243px;height:26px;background:#c6c6c6"></div>
<div class="a" style="left:24px;top:246px;width:100px;height:24px;background:#ececec"></div>
<div class="a" style="left:125px;top:246px;width:140px;height:24px;background:#fff"></div>
<div class="t" style="left:28px;top:248px;line-height:16px;height:16px">材质</div>
<div class="t" style="left:127px;top:250px;line-height:16px;height:16px">ByLayer</div>
<div class="a" style="left:7px;top:282px;width:259px;height:26px;background:#c4c4c4;clip-path:polygon(5px 0,254px 0,259px 5px,259px 26px,0 26px,0 5px)"></div>
<div class="t" style="left:14px;top:286px;font-weight:bold;line-height:16px;height:16px">几何图形</div>
<svg style="left:249px;top:289px" width="9" height="10" viewBox="0 0 9 10"><path d="M.5 4.500l4-3.500 4 3.500M.5 9l4-3.500 4 3.500" fill="none" stroke="#fff" stroke-width="1.400"/></svg>
<div class="a" style="left:23px;top:307px;width:243px;height:151px;background:#c6c6c6"></div>
<div class="a" style="left:24px;top:308px;width:100px;height:24px;background:#ececec"></div>
<div class="a" style="left:125px;top:308px;width:140px;height:24px;background:#fff"></div>
<div class="t" style="left:28px;top:310px;line-height:16px;height:16px">位置 X 坐标</div>
<div class="t" style="left:127px;top:312px;line-height:16px;height:16px">67627.914</div>
<div class="a" style="left:24px;top:333px;width:100px;height:24px;background:#ececec"></div>
<div class="a" style="left:125px;top:333px;width:140px;height:24px;background:#fff"></div>
<div class="t" style="left:28px;top:335px;line-height:16px;height:16px">位置 Y 坐标</div>
<div class="t" style="left:127px;top:337px;line-height:16px;height:16px">7990.263</div>
<div class="a" style="left:24px;top:358px;width:100px;height:24px;background:#ececec"></div>
<div class="a" style="left:125px;top:358px;width:140px;height:24px;background:#fff"></div>
<div class="t" style="left:28px;top:360px;line-height:16px;height:16px">位置 Z 坐标</div>
<div class="t" style="left:127px;top:362px;line-height:16px;height:16px">294.621</div>
<div class="a" style="left:24px;top:383px;width:100px;height:24px;background:#ececec"></div>
<div class="a" style="left:125px;top:383px;width:140px;height:24px;background:#fff"></div>
<div class="t" style="left:28px;top:385px;line-height:16px;height:16px">X 比例</div>
<div class="t" style="left:127px;top:387px;line-height:16px;height:16px">0.5</div>
<div class="a" style="left:24px;top:408px;width:100px;height:24px;background:#ececec"></div>
<div class="a" style="left:125px;top:408px;width:140px;height:24px;background:#fff"></div>
<div class="t" style="left:28px;top:410px;line-height:16px;height:16px">Y 比例</div>
<div class="t" style="left:127px;top:412px;line-height:16px;height:16px">0.5</div>
<div class="a" style="left:24px;top:433px;width:100px;height:24px;background:#ececec"></div>
<div class="a" style="left:125px;top:433px;width:140px;height:24px;background:#fff"></div>
<div class="t" style="left:28px;top:435px;line-height:16px;height:16px">Z 比例</div>
<div class="t" style="left:127px;top:437px;line-height:16px;height:16px">0.5</div>
<div class="a" style="left:7px;top:469px;width:259px;height:26px;background:#c4c4c4;clip-path:polygon(5px 0,254px 0,259px 5px,259px 26px,0 26px,0 5px)"></div>
<div class="t" style="left:14px;top:473px;font-weight:bold;line-height:16px;height:16px">其他</div>
<svg style="left:249px;top:476px" width="9" height="10" viewBox="0 0 9 10"><path d="M.5 4.500l4-3.500 4 3.500M.5 9l4-3.500 4 3.500" fill="none" stroke="#fff" stroke-width="1.400"/></svg>
<div class="a" style="left:23px;top:494px;width:243px;height:126px;background:#c6c6c6"></div>
<div class="a" style="left:24px;top:495px;width:100px;height:24px;background:#ececec"></div>
<div class="a" style="left:125px;top:495px;width:140px;height:24px;background:#ececec"></div>
<div class="t" style="left:28px;top:497px;line-height:16px;height:16px">名称</div>
<div class="t" style="left:127px;top:499px;line-height:16px;height:16px">DG</div>
<div class="a" style="left:24px;top:520px;width:100px;height:24px;background:#ececec"></div>
<div class="a" style="left:125px;top:520px;width:140px;height:24px;background:#fff"></div>
<div class="t" style="left:28px;top:522px;line-height:16px;height:16px">旋转</div>
<div class="t" style="left:127px;top:524px;line-height:16px;height:16px">0</div>
<div class="a" style="left:24px;top:545px;width:100px;height:24px;background:#ececec"></div>
<div class="a" style="left:125px;top:545px;width:140px;height:24px;background:#ececec"></div>
<div class="t" style="left:28px;top:547px;line-height:16px;height:16px">注释性</div>
<div class="t" style="left:127px;top:549px;line-height:16px;height:16px">否</div>
<div class="a" style="left:24px;top:570px;width:100px;height:24px;background:#ececec"></div>
<div class="a" style="left:125px;top:570px;width:140px;height:24px;background:#ececec"></div>
<div class="t" style="left:28px;top:572px;line-height:16px;height:16px">块单位</div>
<div class="t" style="left:127px;top:574px;line-height:16px;height:16px">无单位</div>
<div class="a" style="left:24px;top:595px;width:100px;height:24px;background:#ececec"></div>
<div class="a" style="left:125px;top:595px;width:140px;height:24px;background:#ececec"></div>
<div class="t" style="left:28px;top:597px;line-height:16px;height:16px">单位因子</div>
<div class="t" style="left:127px;top:599px;line-height:16px;height:16px">1</div>
<div class="a" style="left:7px;top:631px;width:259px;height:26px;background:#c4c4c4;clip-path:polygon(5px 0,254px 0,259px 5px,259px 26px,0 26px,0 5px)"></div>
<div class="t" style="left:14px;top:635px;font-weight:bold;line-height:16px;height:16px">点属性</div>
<svg style="left:249px;top:638px" width="9" height="10" viewBox="0 0 9 10"><path d="M.5 4.500l4-3.500 4 3.500M.5 9l4-3.500 4 3.500" fill="none" stroke="#fff" stroke-width="1.400"/></svg>
<div class="a" style="left:23px;top:656px;width:243px;height:151px;background:#c6c6c6"></div>
<div class="a" style="left:24px;top:657px;width:100px;height:24px;background:#ececec"></div>
<div class="a" style="left:125px;top:657px;width:140px;height:24px;background:#fff"></div>
<div class="t" style="left:28px;top:659px;line-height:16px;height:16px">图上点号</div>
<div class="t" style="left:127px;top:661px;line-height:16px;height:16px">LD27</div>
<div class="a" style="left:24px;top:682px;width:100px;height:24px;background:#ececec"></div>
<div class="a" style="left:125px;top:682px;width:140px;height:24px;background:#fff"></div>
<div class="t" style="left:28px;top:684px;line-height:16px;height:16px">物探点号</div>
<div class="t" style="left:127px;top:686px;line-height:16px;height:16px">LD45</div>
<div class="a" style="left:24px;top:707px;width:100px;height:24px;background:#ececec"></div>
<div class="a" style="left:125px;top:707px;width:140px;height:24px;background:#fff"></div>
<div class="t" style="left:28px;top:709px;line-height:16px;height:16px">管线子类</div>
<div class="a" style="left:24px;top:732px;width:100px;height:24px;background:#ececec"></div>
<div class="a" style="left:125px;top:732px;width:140px;height:24px;background:#fff"></div>
<div class="t" style="left:28px;top:734px;line-height:16px;height:16px">管线点编码</div>
<div class="a" style="left:24px;top:757px;width:100px;height:24px;background:#ececec"></div>
<div class="a" style="left:125px;top:757px;width:140px;height:24px;background:#fff"></div>
<div class="t" style="left:28px;top:759px;line-height:16px;height:16px">特征</div>
<div class="a" style="left:24px;top:782px;width:100px;height:24px;background:#ececec"></div>
<div class="a" style="left:125px;top:782px;width:140px;height:24px;background:#fff"></div>
<div class="t" style="left:28px;top:784px;line-height:16px;height:16px">附属物</div>
<div class="t" style="left:127px;top:786px;line-height:16px;height:16px">路灯</div>
</div>
<div class="a" style="left:18px;top:859px;width:260px;height:49px;border:1px solid #c4c4c4;background:#eeeeee"></div>
<div class="a" style="left:291px;top:0;width:1px;height:921px;background:#d4d4d4"></div>
<div class="a" style="left:292px;top:0;width:1px;height:921px;background:#fdfdfd"></div>
</div>
<div class="a" style="left:293px;top:95px;width:208px;height:818px;background:#eaf0fb"></div><div class="a" style="left:292px;top:96px;width:3px;height:920px;background:#7d7d7d;border-left:1px solid #fff"></div>
<div class="a" style="left:295px;top:95px;width:202px;height:28px;background:linear-gradient(180deg,#ffdcae 0%,#ffc983 25%,#ffb254 60%,#ffa848 80%,#ffb768 100%);border-bottom:1px solid #9a8a78"></div>
<svg style="left:300px;top:100px" width="4" height="20" viewBox="0 0 4 20"><path d="M2 1v18" stroke="#fff0d8" stroke-width="2" stroke-dasharray="2 2"/><path d="M1 0v18" stroke="#5a3000" stroke-width="2" stroke-dasharray="2 2"/></svg>
<div class="t" style="left:309px;top:102px;color:#3a2000">操作工具</div>
<svg style="left:482px;top:102px" width="9" height="11" viewBox="0 0 9 11"><path d="M2 1h5M3 1v5M6 1v5M1 6h7M4.500 6v5" stroke="#222" stroke-width="1.300" fill="none"/><path d="M5 1h1v5H5z" fill="#222"/></svg>
<div class="a" style="left:296px;top:123px;width:201px;height:766px;background:#a3c1f6"></div>
<svg style="left:302px;top:129px" width="4" height="40" viewBox="0 0 4 40"><path d="M2 0v38" stroke="#1a3a9a" stroke-width="2" stroke-dasharray="2 2"/></svg>
<div class="t" style="left:315px;top:131px;color:#10204a">文件</div>
<div class="t" style="left:356px;top:131px;color:#10204a">设置</div>
<div class="t" style="left:395px;top:131px;color:#10204a">数据处理</div>
<div class="t" style="left:315px;top:154px;color:#10204a">成图分幅</div>
<div class="t" style="left:379px;top:154px;color:#10204a">视图</div>
<div class="t" style="left:419px;top:154px;color:#10204a">关于</div>
<div class="a" style="left:298px;top:177px;width:24px;height:348px;border-radius:5px 0 0 0;background:linear-gradient(90deg,#e4edfc 0%,#cfdef9 50%,#9fbdf2 100%)"></div>
<svg style="left:301px;top:180px" width="16" height="3" viewBox="0 0 16 3"><path d="M1 1.500h14" stroke="#1a3a9a" stroke-width="2" stroke-dasharray="2 2"/></svg>
<svg style="left:302px;top:187px" width="16" height="16" viewBox="0 0 16 16"><rect x="0" y="0" width="16" height="16" fill="#c8c8c8"/><path d="M3.500 1.500h6l3 3v10h-9z" fill="#fff" stroke="#000"/><path d="M5.500 6.500h5M5.500 8.500h5M5.500 10.500h5M5.500 12.500h5" stroke="#000" stroke-width="1"/><path d="M1 2.500h3M2.500 1v3" stroke="#444" stroke-width=".8"/></svg>
<svg style="left:302px;top:209px" width="16" height="16" viewBox="0 0 16 16"><rect x="0" y="0" width="16" height="16" fill="#c8c8c8"/><path d="M1 13V5h4l1 1h5v2" fill="#fff" stroke="#000" stroke-width=".8"/><path d="M1 13l3-5h11l-3 5z" fill="#8a8a20" stroke="#000" stroke-width=".8"/><path d="M9 3c2-2 4-1 5 1M14 4l-2 .2M14 4l.2-2" stroke="#000" stroke-width=".9" fill="none"/></svg>
<svg style="left:302px;top:232px" width="16" height="16" viewBox="0 0 16 16"><rect x="0" y="0" width="16" height="16" fill="#c8c8c8"/><path d="M1 13V5h4l1 1h5v2" fill="#fff" stroke="#000" stroke-width=".8"/><path d="M1 13l3-5h11l-3 5z" fill="#8a8a20" stroke="#000" stroke-width=".8"/><path d="M8 1v6M8 7l-2-2M8 7l2-2" stroke="#000" stroke-width="1" fill="none"/></svg>
<svg style="left:302px;top:253px" width="16" height="16" viewBox="0 0 16 16"><rect x="0" y="0" width="16" height="16" fill="#c8c8c8"/><path d="M3.500 1.500h6l3 3v10h-9z" fill="#fff" stroke="#000"/><path d="M5.500 5.500h3M5.500 7.500h5M5.500 9.500h5M5.500 11.500h5" stroke="#000" stroke-width="1"/></svg>
<svg style="left:302px;top:282px" width="16" height="16" viewBox="0 0 16 16"><rect x="0" y="0" width="16" height="16" fill="#c8c8c8"/><path d="M8 2h5v12H8zM8 8H4l-2 2 2 2h2l1 2h3" fill="#fff" stroke="#000" stroke-width="1"/><circle cx="10.500" cy="5" r="1" fill="#000"/><circle cx="5" cy="10.500" r="1" fill="#000"/></svg>
<svg style="left:302px;top:309px" width="16" height="16" viewBox="0 0 16 16"><rect x="0" y="0" width="16" height="16" fill="#c8c8c8"/><path d="M1 2h14M1 5h14M1 8h14M1 11h14M1 14h14" stroke="#000" stroke-width="1.200"/><path d="M1 6.500h6v-3h8M1 12.500h5v-3h9" stroke="#f00000" stroke-width="1.800" fill="none"/></svg>
<svg style="left:302px;top:332px" width="16" height="16" viewBox="0 0 16 16"><rect x="0" y="0" width="16" height="16" fill="#c8c8c8"/><path d="M1 2h14M1 5h14M1 8h14M1 11h14M1 14h14" stroke="#000" stroke-width="1.500"/><path d="M1 6.500h7v-3h7M2 12.500h5v-3h8" stroke="#e00000" stroke-width="1.500" fill="none"/></svg>
<svg style="left:302px;top:354px" width="16" height="16" viewBox="0 0 16 16"><rect x="0" y="0" width="16" height="16" fill="#c8c8c8"/><path d="M1 3h5l1 1h8v9H1z" fill="#d8d8b0" stroke="#000" stroke-width=".7"/><circle cx="7" cy="7" r="4" fill="#9fe0f0" stroke="#000" stroke-width="1.200"/><path d="M10 10l5 5" stroke="#1a3ab0" stroke-width="2.200"/></svg>
<svg style="left:302px;top:376px" width="16" height="16" viewBox="0 0 16 16"><rect x="0" y="0" width="16" height="16" fill="#20a060"/><rect x="0" y="0" width="8" height="8" fill="#2a2ad0"/><rect x="8" y="8" width="8" height="8" fill="#f020d0"/><rect x="0" y="10" width="6" height="6" fill="#40d0d0"/><circle cx="5" cy="5" r="2.500" fill="#fff"/><circle cx="11" cy="5" r="2.500" fill="#e8e8e8"/><circle cx="8" cy="10" r="2.500" fill="#101060"/><path d="M0 0l16 16M16 0L0 16" stroke="#000" stroke-width=".8"/></svg>
<svg style="left:302px;top:397px" width="16" height="16" viewBox="0 0 16 16"><rect x="0" y="0" width="16" height="16" fill="#c8c8c8"/><rect x="2" y="2" width="12" height="13" fill="#fff" stroke="#667" stroke-width=".6"/><rect x="3" y="3" width="4" height="3" fill="#e01010"/><rect x="8" y="3" width="5" height="2" fill="#2020e0"/><rect x="3" y="7" width="3" height="7" fill="#2020e0"/><rect x="7" y="7" width="3" height="5" fill="#e010e0"/><rect x="11" y="7" width="2" height="3" fill="#e01010"/></svg>
<svg style="left:302px;top:419px" width="16" height="16" viewBox="0 0 16 16"><rect x="0" y="0" width="16" height="16" fill="#c8c8c8"/><rect x="1" y="1" width="14" height="4" fill="#30a0a0"/><rect x="1" y="6" width="5" height="9" fill="#2020e0"/><rect x="7" y="6" width="4" height="4" fill="#e01010"/><rect x="11" y="9" width="4" height="6" fill="#e010e0"/><rect x="7" y="11" width="3" height="4" fill="#fff"/></svg>
<svg style="left:302px;top:441px" width="16" height="16" viewBox="0 0 16 16"><rect x="0" y="0" width="16" height="16" fill="#c8c8c8"/><rect x="1" y="1" width="12" height="11" fill="#f4f4f4" stroke="#444" stroke-width=".7"/><rect x="3" y="5" width="2" height="6" fill="#e010e0"/><rect x="6" y="3" width="2" height="8" fill="#2020e0"/><rect x="9" y="6" width="2" height="5" fill="#e01010"/><circle cx="11" cy="11.500" r="4" fill="#20b040"/><path d="M11 11.500V7.500a4 4 0 0 1 4 4z" fill="#e01010"/><path d="M11 11.500h4a4 4 0 0 1-6 3.400z" fill="#2020e0"/></svg>
<svg style="left:302px;top:469px" width="16" height="16" viewBox="0 0 16 16"><rect x="0" y="0" width="16" height="16" fill="#c8c8c8"/><rect x="1" y="2" width="14" height="2" fill="#2020c0"/><rect x="1" y="4" width="14" height="3" fill="#e060e0"/><rect x="1" y="8" width="14" height="3" fill="#40b060"/><rect x="1" y="12" width="14" height="3" fill="#e04040"/></svg>
<svg style="left:302px;top:491px" width="16" height="16" viewBox="0 0 16 16"><rect x="0" y="0" width="16" height="16" fill="#c8c8c8"/><rect x="1" y="1" width="7" height="7" fill="#1010e0"/><rect x="8" y="1" width="7" height="7" fill="#f01010"/><rect x="1" y="8" width="7" height="7" fill="#fff"/><rect x="8" y="8" width="7" height="7" fill="#f010e0"/></svg>
<div class="a" style="left:303px;top:275px;width:14px;height:1px;background:#fff"></div>
<div class="a" style="left:303px;top:303px;width:14px;height:1px;background:#fff"></div>
<div class="a" style="left:303px;top:463px;width:14px;height:1px;background:#fff"></div>
<div class="a" style="left:298px;top:513px;width:24px;height:11px;background:linear-gradient(180deg,#5a86d8,#2a55b0)"></div>
<svg style="left:312px;top:515px" width="8" height="8" viewBox="0 0 8 8"><path d="M1 0v7M3 0l4 3.500-4 3.500z" stroke="#fff" stroke-width="1" fill="#fff"/><path d="M4 2l3 4" stroke="#000" stroke-width=".8"/></svg>
<div class="a" style="left:322px;top:164px;width:174px;height:723px;background:linear-gradient(180deg,#5b86d8 0%,#4e7bd0 18%,#3460bd 45%,#1c45a4 75%,#08298c 100%)"></div>
<div class="a" style="left:322px;top:164px;width:174px;height:23px;border:1px solid #2a50a8;background:linear-gradient(180deg,#e3ecfc 0%,#d3e0f8 35%,#b9cdf3 60%,#7fa3e6 100%)"></div><div class="t" style="left:322px;top:169px;width:174px;text-align:center;color:#1a1a1a">数据处理</div>
<div class="a" style="left:322px;top:186px;width:174px;height:23px;border:1px solid #2a50a8;background:linear-gradient(180deg,#e3ecfc 0%,#d3e0f8 35%,#b9cdf3 60%,#7fa3e6 100%)"></div><div class="t" style="left:322px;top:191px;width:174px;text-align:center;color:#1a1a1a">成图分幅</div>
<div class="a" style="left:322px;top:208px;width:174px;height:23px;border:1px solid #2a50a8;background:linear-gradient(180deg,#e3ecfc 0%,#d3e0f8 35%,#b9cdf3 60%,#7fa3e6 100%)"></div><div class="t" style="left:322px;top:213px;width:174px;text-align:center;color:#1a1a1a">图形标注</div>
<div class="a" style="left:322px;top:230px;width:174px;height:23px;border:1px solid #2a50a8;background:linear-gradient(180deg,#e3ecfc 0%,#d3e0f8 35%,#b9cdf3 60%,#7fa3e6 100%)"></div><div class="t" style="left:322px;top:235px;width:174px;text-align:center;color:#1a1a1a">图形编辑</div>
<div class="a" style="left:322px;top:252px;width:174px;height:23px;border:1px solid #2a50a8;background:linear-gradient(180deg,#e3ecfc 0%,#d3e0f8 35%,#b9cdf3 60%,#7fa3e6 100%)"></div><div class="t" style="left:322px;top:257px;width:174px;text-align:center;color:#1a1a1a">统计查询</div>
<svg style="left:333px;top:283px" width="16" height="16" viewBox="0 0 16 16"><rect x="0" y="0" width="16" height="16" fill="#e8e8e8"/><circle cx="6.500" cy="6" r="4.500" fill="#dfeaf2" stroke="#888" stroke-width="1.200"/><path d="M9.500 9.500l5 5" stroke="#a06030" stroke-width="2"/></svg>
<div class="t" style="left:356px;top:285px;color:#fff">查找点号</div>
<svg style="left:333px;top:304px" width="16" height="16" viewBox="0 0 16 16"><rect x="0" y="0" width="16" height="16" fill="#c8c8c8"/><ellipse cx="7.500" cy="10" rx="6" ry="4.500" fill="#2050d0"/><ellipse cx="7.500" cy="7.500" rx="6" ry="4.500" fill="#40d8d8"/><path d="M7.500 7.500L4 3.800a6 4.500 0 0 1 8 .4z" fill="#e01080"/><path d="M7.500 7.500l6-.5a6 4.500 0 0 1-4 4.300z" fill="#f0e020"/><ellipse cx="11" cy="4" rx="3.500" ry="3" fill="#e01080"/></svg>
<div class="t" style="left:356px;top:306px;color:#fff">点数统计</div>
<svg style="left:333px;top:325px" width="16" height="16" viewBox="0 0 16 16"><rect x="0" y="0" width="16" height="16" fill="#fff"/><rect x="1" y="0" width="2" height="15" fill="#000"/><rect x="4" y="1" width="2" height="14" fill="#2020c0"/><rect x="7" y="2" width="2" height="13" fill="#e020e0"/><rect x="10" y="4" width="2" height="11" fill="#f0e020"/><rect x="13" y="3" width="2" height="12" fill="#e02020"/><rect x="11" y="1" width="4" height="2" fill="#2020c0"/></svg>
<div class="t" style="left:356px;top:327px;color:#fff">长度统计</div>
<svg style="left:333px;top:346px" width="16" height="16" viewBox="0 0 16 16"><rect x="0" y="0" width="16" height="16" fill="#f0f0f0"/><rect x="1" y="0" width="3" height="3" fill="#e02020"/><rect x="4" y="0" width="3" height="3" fill="#e0a020"/><rect x="7" y="0" width="3" height="3" fill="#30b030"/><rect x="10" y="0" width="3" height="3" fill="#3030e0"/><rect x="13" y="0" width="3" height="3" fill="#c020c0"/><path d="M3 8l8-3 3 2-7 4z" fill="#e8c0a0" stroke="#906040" stroke-width=".6"/><path d="M1 10h6M1 13h6" stroke="#608060" stroke-width="1.400"/><path d="M10 15l2-6 2 6" stroke="#555" stroke-width="1" fill="none"/></svg>
<div class="t" style="left:356px;top:348px;color:#fff">属性查询修改</div>
<svg style="left:333px;top:367px" width="16" height="16" viewBox="0 0 16 16"><rect x="0" y="0" width="16" height="16" fill="#f4f4f4"/><path d="M1 10l8-7 5 1-1 5-8 6z" fill="#f8f020" stroke="#444" stroke-width=".8"/><circle cx="11.500" cy="5.500" r="1" fill="#fff" stroke="#444" stroke-width=".6"/><path d="M4 10l4-3M5.500 12l4-3" stroke="#444" stroke-width=".9"/><path d="M12 5c1-2 2-3 3-3" stroke="#444" stroke-width=".7" fill="none"/></svg>
<div class="t" style="left:356px;top:369px;color:#fff">扩展属性查询</div>
<div class="a" style="left:331px;top:387px;width:157px;height:20px;background:#ffb565;border:1px solid #16245e"></div>
<svg style="left:333px;top:388px" width="16" height="16" viewBox="0 0 16 16"><rect x="0" y="0" width="16" height="16" fill="#c8c8c8"/><rect x="1" y="1" width="12" height="11" fill="#f4f4f4" stroke="#444" stroke-width=".7"/><rect x="3" y="5" width="2" height="6" fill="#e010e0"/><rect x="6" y="3" width="2" height="8" fill="#2020e0"/><rect x="9" y="6" width="2" height="5" fill="#e01010"/><circle cx="11" cy="11.500" r="4" fill="#20b040"/><path d="M11 11.500V7.500a4 4 0 0 1 4 4z" fill="#e01010"/><path d="M11 11.500h4a4 4 0 0 1-6 3.400z" fill="#2020e0"/></svg>
<div class="t" style="left:356px;top:390px;color:#000">分类统计</div>
<div class="a" style="left:322px;top:842px;width:174px;height:23px;border:1px solid #2a50a8;background:linear-gradient(180deg,#e3ecfc 0%,#d3e0f8 35%,#b9cdf3 60%,#7fa3e6 100%)"></div><div class="t" style="left:322px;top:847px;width:174px;text-align:center;color:#1a1a1a">数据更新</div>
<div class="a" style="left:322px;top:864px;width:174px;height:23px;border:1px solid #2a50a8;background:linear-gradient(180deg,#e3ecfc 0%,#d3e0f8 35%,#b9cdf3 60%,#7fa3e6 100%)"></div><div class="t" style="left:322px;top:869px;width:174px;text-align:center;color:#1a1a1a">数据输出</div>
<div class="a" style="left:296px;top:888px;width:203px;height:24px;background:linear-gradient(180deg,#bcd1f6,#dce7fb)"></div><div class="a" style="left:296px;top:888px;width:201px;height:1px;background:#9a9aa0"></div>
<div class="a" style="left:298px;top:890px;width:35px;height:19px;background:linear-gradient(180deg,#d5e2f9,#a9c4f3);border:1px solid #7a9ad8;border-top:none;border-radius:0 0 4px 4px"></div>
<div class="t" style="left:298px;top:893px;width:35px;text-align:center;color:#10204a">类别</div>
<div class="a" style="left:334px;top:890px;width:35px;height:19px;background:linear-gradient(180deg,#ffe6c4,#ffbe78);border:1px solid #e8a860;border-top:none;border-radius:0 0 4px 4px"></div>
<div class="t" style="left:334px;top:893px;width:35px;text-align:center;color:#10204a">工具</div>
<div class="a" style="left:370px;top:890px;width:36px;height:19px;background:linear-gradient(180deg,#d5e2f9,#a9c4f3);border:1px solid #7a9ad8;border-top:none;border-radius:0 0 4px 4px"></div>
<div class="t" style="left:370px;top:893px;width:36px;text-align:center;color:#10204a">属性</div>
<div class="a" style="left:501px;top:95px;width:29px;height:818px;background:#f0f0f0"></div>
<div class="a" style="left:502px;top:96px;width:26px;height:431px;background:linear-gradient(90deg,#f7f7f7,#efefef);border:1px solid #fff;border-right-color:#a8a8a8;border-bottom-color:#a8a8a8"></div>
<div class="a" style="left:505px;top:98px;width:20px;height:3px;border-top:1px solid #fff;border-bottom:1px solid #a0a0a0;background:#e0e0e0"></div><div class="a" style="left:505px;top:102px;width:20px;height:3px;border-top:1px solid #fff;border-bottom:1px solid #a0a0a0;background:#e0e0e0"></div>
<svg style="left:506px;top:109px" width="16" height="16" viewBox="0 0 16 16"><path d="M2 14L14 2" stroke="#111" stroke-width="1.200"/><rect x="0.8" y="12.8" width="2.400" height="2.400" fill="#1f5a8a"/><rect x="12.8" y="0.8" width="2.400" height="2.400" fill="#1f5a8a"/></svg>
<svg style="left:506px;top:131px" width="16" height="16" viewBox="0 0 16 16"><path d="M2 14L14 2" stroke="#111" stroke-width="1.200"/><path d="M14.500 1.500l-4 1 3 3zM1.500 14.500l4-1-3-3z" fill="#111"/><rect x="6.8" y="6.8" width="2.400" height="2.400" fill="#1f5a8a"/></svg>
<svg style="left:506px;top:153px" width="16" height="16" viewBox="0 0 16 16"><path d="M1 12h9c6 0 6-8 0-8" fill="none" stroke="#111" stroke-width="1.200"/><rect x="-0.19999999999999996" y="10.8" width="2.400" height="2.400" fill="#1f5a8a"/><rect x="8.8" y="10.8" width="2.400" height="2.400" fill="#1f5a8a"/><rect x="8.8" y="2.8" width="2.400" height="2.400" fill="#1f5a8a"/></svg>
<svg style="left:506px;top:175px" width="16" height="16" viewBox="0 0 16 16"><path d="M8 1.500l6.500 5-2.500 7.500H4L1.500 6.500z" fill="url(#gdoc)" stroke="#111" stroke-width="1.200"/></svg>
<svg style="left:506px;top:197px" width="16" height="16" viewBox="0 0 16 16"><rect x="2" y="4.500" width="12" height="8" fill="url(#gdoc)" stroke="#111" stroke-width="1.200"/><rect x="0.8" y="11.3" width="2.400" height="2.400" fill="#1f5a8a"/><rect x="12.8" y="3.3" width="2.400" height="2.400" fill="#1f5a8a"/></svg>
<svg style="left:506px;top:219px" width="16" height="16" viewBox="0 0 16 16"><path d="M2 14C2 7 7 3 14 2" fill="none" stroke="#111" stroke-width="1.200"/><rect x="0.8" y="12.8" width="2.400" height="2.400" fill="#1f5a8a"/><rect x="12.8" y="0.8" width="2.400" height="2.400" fill="#1f5a8a"/><rect x="3.8" y="5.8" width="2.400" height="2.400" fill="#1f5a8a"/></svg>
<svg style="left:506px;top:241px" width="16" height="16" viewBox="0 0 16 16"><circle cx="8" cy="8" r="6.500" fill="url(#gdoc)" stroke="#111" stroke-width="1.300"/><path d="M8 8l4-4" stroke="#1f5a8a" stroke-width="1.200"/><rect x="6.8" y="6.8" width="2.400" height="2.400" fill="#1f5a8a"/></svg>
<svg style="left:506px;top:263px" width="16" height="16" viewBox="0 0 16 16"><path d="M4 2c2-2 5-1 5 1 2-1 5 0 4 3 2 1 2 5-1 5 0 3-4 4-5 2-2 1-5 0-4-3-3-1-2-5 0-5 0-1 0-2 1-3z" fill="url(#gdoc)" stroke="#111" stroke-width="1.200"/></svg>
<svg style="left:506px;top:285px" width="16" height="16" viewBox="0 0 16 16"><path d="M1 13C3 3 6 6 8 8s5 3 7-6" fill="none" stroke="#111" stroke-width="1.200"/></svg>
<svg style="left:506px;top:307px" width="16" height="16" viewBox="0 0 16 16"><ellipse cx="8" cy="8" rx="6.500" ry="4" fill="url(#gdoc)" stroke="#111" stroke-width="1.300"/><rect x="0.30000000000000004" y="6.8" width="2.400" height="2.400" fill="#1f5a8a"/><rect x="13.3" y="6.8" width="2.400" height="2.400" fill="#1f5a8a"/><rect x="6.8" y="2.8" width="2.400" height="2.400" fill="#1f5a8a"/><rect x="6.8" y="10.8" width="2.400" height="2.400" fill="#1f5a8a"/></svg>
<svg style="left:506px;top:329px" width="16" height="16" viewBox="0 0 16 16"><path d="M3 11C0 7 4 3 9 3c6 0 7 6 2 8" fill="none" stroke="#111" stroke-width="1.300"/><rect x="1.8" y="9.8" width="2.400" height="2.400" fill="#1f5a8a"/><rect x="6.8" y="11.3" width="2.400" height="2.400" fill="#1f5a8a"/></svg>
<svg style="left:506px;top:351px" width="16" height="16" viewBox="0 0 16 16"><path d="M5 1h8l3 3v9H5z" fill="#e8eef8" stroke="#8a9ab8" stroke-width=".7"/><rect x="2" y="5" width="8" height="6" fill="#e8f0a0" stroke="#1f4c8a" stroke-width="1"/><circle cx="10" cy="11.500" r="3.500" fill="#c8d8b0" stroke="#1f4c8a" stroke-width="1"/><path d="M16 13v3h-3z" fill="#111"/><rect x="0.8" y="6.8" width="2.400" height="2.400" fill="#1f5a8a"/></svg>
<svg style="left:506px;top:373px" width="16" height="16" viewBox="0 0 16 16"><rect x="3" y="3" width="8" height="6" fill="#e8f0a0" stroke="#1f4c8a" stroke-width="1"/><circle cx="11" cy="10.500" r="3.500" fill="#c8d8b0" stroke="#1f4c8a" stroke-width="1"/><rect x="1.8" y="6.8" width="2.400" height="2.400" fill="#1f5a8a"/></svg>
<svg style="left:506px;top:395px" width="16" height="16" viewBox="0 0 16 16"><rect x="6.8" y="6.8" width="2.400" height="2.400" fill="#1f5a8a"/></svg>
<svg style="left:506px;top:417px" width="16" height="16" viewBox="0 0 16 16"><rect x="3" y="3" width="10" height="10" fill="#fff" stroke="#111" stroke-width="1"/><path d="M3 6l3-3M3 9l6-6M3 12l9-9M5 13l8-8M8 13l5-5M11 13l2-2" stroke="#1f5a8a" stroke-width=".9"/><path d="M1 3h14M1 13h14M3 1v14M13 1v14" stroke="#1f5a8a" stroke-width="1"/></svg>
<svg style="left:506px;top:439px" width="16" height="16" viewBox="0 0 16 16"><rect x="3" y="3" width="10" height="10" fill="url(#ggr)" stroke="#111" stroke-width="1"/><path d="M1 3h14M1 13h14M3 1v14M13 1v14" stroke="#111" stroke-width="1.200"/></svg>
<svg style="left:506px;top:461px" width="16" height="16" viewBox="0 0 16 16"><path d="M2 3h8l4 4v7H2z" fill="url(#gdoc)" stroke="#1f4c8a" stroke-width="1.100"/><circle cx="7.500" cy="8.500" r="2.800" fill="#fff" stroke="#1f4c8a" stroke-width="1"/></svg>
<svg style="left:506px;top:483px" width="16" height="16" viewBox="0 0 16 16"><rect x="2" y="2" width="12" height="12" fill="#fff" stroke="#4a6ab0" stroke-width="1"/><rect x="2" y="2" width="12" height="3.500" fill="#5a7ac0"/><path d="M2 8.500h12M2 11.200h12M6 5.500V14M10 5.500V14" stroke="#6a8ad0" stroke-width=".9"/></svg>
<svg style="left:506px;top:505px" width="16" height="16" viewBox="0 0 16 16"><text x="8" y="15" font-size="17" text-anchor="middle" fill="#000" font-family="Liberation Sans,sans-serif">A</text></svg>
<div class="a" id="canvas" style="left:530px;top:97px;width:1092px;height:781px;background:#000;overflow:hidden">
<svg style="left:0;top:0" width="1092" height="781" viewBox="530 97 1092 781">
<defs><linearGradient id="ggr" x1="0" y1="0" x2="1" y2="1"><stop offset="0" stop-color="#111"/><stop offset="1" stop-color="#b8b8a0"/></linearGradient></defs>
<path d="M533 124.500L1345 159.500" stroke="#1fb41f" stroke-width="1.100" stroke-dasharray="73 23" fill="none"/>
<path d="M1240.500 97L1211 283" stroke="#5a5a5a" stroke-width="1" fill="none"/>
<path d="M1185 283L1155.300 878" stroke="#4a4a4a" stroke-width="1" fill="none"/>
<path d="M866.700 752L861.300 878" stroke="#d02828" stroke-width="1.200" fill="none"/>
<g style="mix-blend-mode:lighten"><g transform="scale(0.72,1)"><text x="1841.8 1894.0 1943.1 1982.0" y="152" font-size="76" fill="#1ee61e" stroke="#000" stroke-width="2.400" font-family="Liberation Sans,sans-serif">GT21</text></g></g>
<g style="mix-blend-mode:lighten"><g transform="scale(0.72,1)"><text x="1819.6 1872.0 1919.8 1967.1" y="171" font-size="76" fill="#1ee61e" stroke="#000" stroke-width="2.400" font-family="Liberation Sans,sans-serif">GT20</text></g></g>
<path d="M1422 150.500h35" stroke="#1ee61e" stroke-width="3"/>
<circle cx="1378" cy="143" r="11.500" fill="#f4fff0"/><circle cx="1364" cy="160.500" r="11.500" fill="#f4fff0"/>
<path d="M1378 132v22M1364 150v21" stroke="#30d030" stroke-width="2"/>
<path d="M1383 104L1378 135" stroke="#9a9a9a" stroke-width="1"/>
<g stroke="#fff" stroke-width="1.200" fill="none"><rect x="545.500" y="846.500" width="14" height="14"/><path d="M553 846V779M560 853h68"/><path d="M553 762l-6 17h12zM647 853l-19-6.500v13z"/><path d="M553 762v17M549.500 770l3.500 9M556.500 770l-3.500 9M647 853h-19M636 849.500l-8 3.500M636 856.500l-8-3.500" stroke-width=".6"/><path d="M546 731l7.500 9.500L561 731M553.500 740.500V750"/></g>
</svg>
</div>
<div class="a" style="left:1891px;top:95px;width:27px;height:818px;background:#f0f0f0"></div>
<div class="a" style="left:1893px;top:98px;width:25px;height:386px;background:linear-gradient(90deg,#f7f7f7,#efefef);border:1px solid #fff;border-bottom-color:#a8a8a8"></div>
<div class="a" style="left:1896px;top:100px;width:22px;height:3px;border-top:1px solid #fff;border-bottom:1px solid #a0a0a0;background:#e0e0e0"></div><div class="a" style="left:1896px;top:104px;width:22px;height:3px;border-top:1px solid #fff;border-bottom:1px solid #a0a0a0;background:#e0e0e0"></div>
<svg style="left:1898px;top:110px" width="16" height="16" viewBox="0 0 16 16"><path d="M15 1.500L7.500 9" stroke="#f0d050" stroke-width="3.400"/><path d="M15.500 2.500L14 1" stroke="#a08020" stroke-width="1"/><path d="M8.500 6l3 3-4 4c-1.500 1-4-1-3-3z" fill="#f08080" stroke="#a04040" stroke-width=".7"/><path d="M1 14.500h13" stroke="#333" stroke-width="1"/></svg>
<svg style="left:1898px;top:132px" width="16" height="16" viewBox="0 0 16 16"><circle cx="4.500" cy="5" r="3.300" fill="#fff" stroke="#111" stroke-width="1.300"/><circle cx="11" cy="11.500" r="3.500" fill="#dfe8f6" stroke="#111" stroke-width="1.300"/><circle cx="8" cy="9" r="2.200" fill="none" stroke="#667" stroke-width=".8"/><path d="M8 3c3-2 6 0 6 3" fill="none" stroke="#1f5a9a" stroke-width="1.400"/><path d="M12 5.500l2 2.500 1.500-3z" fill="#1f5a9a"/></svg>
<svg style="left:1898px;top:154px" width="16" height="16" viewBox="0 0 16 16"><path d="M6.500 2v12H1zM9.500 2v12H15z" fill="#dfe8f6" stroke="#111" stroke-width="1.200"/><path d="M8 0v16" stroke="#1f5a8a" stroke-width="1"/></svg>
<svg style="left:1898px;top:176px" width="16" height="16" viewBox="0 0 16 16"><path d="M1 14v-3.500h3.500V8C4.500 1 14 2 13 8h2v6z" fill="#dfe8f6" stroke="#1f4c8a" stroke-width="1.300"/><path d="M4 14v-1h3V8c0-3 4-3 4 0v3h2" fill="none" stroke="#1f4c8a" stroke-width="1"/></svg>
<svg style="left:1898px;top:198px" width="16" height="16" viewBox="0 0 16 16"><rect x="1" y="1" width="6" height="6" fill="url(#gdoc)" stroke="#111" stroke-width="1.300"/><rect x="9" y="1" width="6" height="6" fill="url(#gdoc)" stroke="#111" stroke-width="1.300"/><rect x="1" y="9" width="6" height="6" fill="url(#gdoc)" stroke="#111" stroke-width="1.300"/><rect x="9" y="9" width="6" height="6" fill="url(#gdoc)" stroke="#111" stroke-width="1.300"/></svg>
<svg style="left:1898px;top:220px" width="16" height="16" viewBox="0 0 16 16"><path d="M8 1v14M1 8h14" stroke="#1f5a9a" stroke-width="1.800"/><path d="M8 0l3 3.500H5zM8 16l3-3.500H5zM0 8l3.500-3v6zM16 8l-3.500-3v6z" fill="#1f5a9a"/></svg>
<svg style="left:1898px;top:242px" width="16" height="16" viewBox="0 0 16 16"><path d="M5 3.500A6 6 0 1 0 11 3.500" fill="none" stroke="#1f5a9a" stroke-width="2"/><path d="M2 1l5 1-3 4z" fill="#1f5a9a"/></svg>
<svg style="left:1898px;top:264px" width="16" height="16" viewBox="0 0 16 16"><rect x="1" y="1" width="14" height="14" fill="url(#gdoc)" stroke="#7a8aa8" stroke-width="1"/><rect x="1" y="7" width="8" height="8" fill="#fff" stroke="#111" stroke-width="1.200" stroke-dasharray="1.500 1"/></svg>
<svg style="left:1898px;top:286px" width="16" height="16" viewBox="0 0 16 16"><path d="M1 15V1h5l9 14z" fill="url(#gdoc)" stroke="#111" stroke-width="1.300"/><path d="M6 1v14" stroke="#111" stroke-width="1" stroke-dasharray="1.500 1"/></svg>
<svg style="left:1898px;top:308px" width="16" height="16" viewBox="0 0 16 16"><path d="M0 9h5M8 9h2M12 9h1.500M15 9h1" stroke="#1f5a9a" stroke-width="1.300"/><path d="M4 15l6-14" stroke="#1f5a9a" stroke-width="1.300"/></svg>
<svg style="left:1898px;top:330px" width="16" height="16" viewBox="0 0 16 16"><path d="M0 9h3M5 9h3" stroke="#1f5a9a" stroke-width="1.300"/><path d="M9 15l6-14" stroke="#1f5a9a" stroke-width="1.300"/></svg>
<svg style="left:1898px;top:352px" width="16" height="16" viewBox="0 0 16 16"><path d="M1.500 14V3.500h13V14z" fill="url(#gdoc)" stroke="#111" stroke-width="1.300"/><rect x="7" y="2" width="2.500" height="2.500" fill="#1f4c8a"/></svg>
<svg style="left:1898px;top:374px" width="16" height="16" viewBox="0 0 16 16"><path d="M1.500 3.500h13V14h-13z" fill="url(#gdoc)" stroke="none"/><path d="M5.500 3.500h-4V14h13V3.500h-4" fill="none" stroke="#111" stroke-width="1.300"/><rect x="4.500" y="2" width="2.200" height="2.500" fill="#1f4c8a"/><rect x="9.500" y="2" width="2.200" height="2.500" fill="#1f4c8a"/></svg>
<svg style="left:1898px;top:396px" width="16" height="16" viewBox="0 0 16 16"><path d="M0 8h16" stroke="#111" stroke-width="1.300"/><path d="M3 4.500L7.500 8 3 11.500zM13 4.500L8.500 8l4.500 3.500z" fill="#111"/></svg>
<svg style="left:1898px;top:418px" width="16" height="16" viewBox="0 0 16 16"><path d="M2 15V7l6-5h7" fill="none" stroke="#111" stroke-width="1.400"/><path d="M2 2h6M2 2v5" stroke="#1f5a9a" stroke-width="1" stroke-dasharray="1 1"/></svg>
<svg style="left:1898px;top:440px" width="16" height="16" viewBox="0 0 16 16"><path d="M2 15V9c0-5 3-7 8-7h5" fill="none" stroke="#111" stroke-width="1.400"/><path d="M2 9c0-5 3-7 8-7H2z" fill="#bcd0ea"/><path d="M2 2h8M2 2v7" stroke="#1f5a9a" stroke-width="1" stroke-dasharray="1 1"/></svg>
<svg style="left:1898px;top:462px" width="16" height="16" viewBox="0 0 16 16"><path d="M1 13l4-6 4 4-5 4z" fill="#d02818" stroke="#801008" stroke-width=".6"/><circle cx="6.500" cy="8" r="2.200" fill="#f0b020"/><circle cx="4" cy="11.500" r="1.600" fill="#f0d040"/><path d="M9 7l3-5M10 8l5-3M10.500 9.500l4.500 1M8 5.500L7.500 1" stroke="#889" stroke-width="1.200"/><path d="M12 1l.8 1.500M15 7.500l-1 .5" stroke="#334" stroke-width="1"/></svg>
<div class="a" style="left:1893px;top:486px;width:25px;height:106px;background:linear-gradient(90deg,#f7f7f7,#efefef);border:1px solid #fff;border-bottom-color:#a8a8a8"></div>
<div class="a" style="left:1896px;top:489px;width:22px;height:3px;border-top:1px solid #fff;border-bottom:1px solid #a0a0a0;background:#e0e0e0"></div><div class="a" style="left:1896px;top:493px;width:22px;height:3px;border-top:1px solid #fff;border-bottom:1px solid #a0a0a0;background:#e0e0e0"></div>
<svg style="left:1898px;top:502.0px" width="16" height="16" viewBox="0 0 16 16"><rect x="1.500" y="1.500" width="9" height="9" fill="#dfe8f6" stroke="#1f4c8a" stroke-width="1.200"/><rect x="5.500" y="5.500" width="9" height="9" fill="#4f82c4" stroke="#1f4c8a" stroke-width="1.200"/><rect x="9" y="10" width="6" height="5" fill="#dfe8f6" stroke="#6a8ab8" stroke-width=".8"/></svg>
<svg style="left:1898px;top:523.5px" width="16" height="16" viewBox="0 0 16 16"><rect x="1.500" y="1.500" width="8" height="7" fill="#dfe8f6" stroke="#1f4c8a" stroke-width="1.200"/><rect x="4.500" y="4.500" width="8" height="8" fill="#4f82c4" stroke="#1f4c8a" stroke-width="1.200"/><rect x="8.500" y="9.500" width="6.500" height="5.500" fill="#dfe8f6" stroke="#1f4c8a" stroke-width="1.200"/></svg>
<svg style="left:1898px;top:545.0px" width="16" height="16" viewBox="0 0 16 16"><rect x="5.500" y="5.500" width="9.500" height="9" fill="#dfe8f6" stroke="#1f4c8a" stroke-width="1.200"/><rect x="1.500" y="1.500" width="10" height="9" fill="#4f82c4" stroke="#1f4c8a" stroke-width="1.200"/></svg>
<svg style="left:1898px;top:566.5px" width="16" height="16" viewBox="0 0 16 16"><rect x="1.500" y="1.500" width="10" height="9" fill="#4f82c4" stroke="#1f4c8a" stroke-width="1.200"/><rect x="5.500" y="5.500" width="9.500" height="9" fill="#dfe8f6" stroke="#1f4c8a" stroke-width="1.200"/></svg>
<div class="a" style="left:294px;top:913px;width:1624px;height:103px;background:#f0f0f0"></div>
<div class="a" style="left:501px;top:878px;width:1417px;height:36px;background:#f0f0f0"></div>
<div class="a" style="left:530px;top:878px;width:1092px;height:18px;background:#f0f0f0"></div>
<div class="a" style="left:530px;top:879px;width:56px;height:14px;background:#f4f4f4;border:1px solid #b8b8b8"></div>
<svg style="left:530px;top:879px" width="56" height="14" viewBox="0 0 56 14"><g fill="#8a8a8a"><path d="M4.500 3v8h1.500V3zM11 3v8L6 7z"/><path d="M25 3v8L20 7z"/><path d="M32 3v8l5-4z"/><path d="M45 3v8l5-4zM50 3v8h1.500V3z"/></g><path d="M14 0v14M28 0v14M42 0v14" stroke="#c8c8c8" stroke-width="1"/></svg>
<svg style="left:586px;top:878px" width="70" height="16" viewBox="0 0 70 16"><path d="M0 0h47l-6 15H6z" fill="#000"/><path d="M47 0l-6 15M41 15h29" stroke="#555" stroke-width="1" fill="none"/></svg>
<div class="t" style="left:597px;top:879px;color:#fff">模型</div>
<div class="t" style="left:637px;top:879px;color:#000">布局1</div>
<div class="a" style="left:530px;top:896px;width:1092px;height:1px;background:#202020"></div>
<div class="a" style="left:502px;top:896px;width:74px;height:17px;background:#f0f0f0;border:1px solid #404040;border-top-color:#e8e8e8;border-left-color:#e8e8e8;box-shadow:inset -1px -1px 0 #909090,inset 1px 1px 0 #fff"></div>
<svg style="left:503px;top:897px" width="72" height="15" viewBox="0 0 72 15"><path d="M14.500 0v15M29 0v15M43.500 0v15M58 0v15" stroke="#a0a0a0" stroke-width="1"/><path d="M3.500 3.500l7 7M10.500 3.500l-7 7" stroke="#000" stroke-width="1.400"/><g fill="#000"><path d="M18 3.500v7h1.500v-7zM25 3.500v7l-4.500-3.500z"/><path d="M39 3.500v7l-4.500-3.500z"/><path d="M48 3.500v7l4.500-3.500z"/><path d="M62 3.500v7l4.500-3.500zM67 3.500v7h1.500v-7z"/></g></svg>
<svg style="left:576px;top:897px" width="80" height="16" viewBox="0 0 80 16"><path d="M0 0l8 15h72V0z" fill="#fdfdfd"/><path d="M0 0l8 15h72" stroke="#202020" stroke-width="1" fill="none"/></svg>
<div class="t" style="left:585px;top:898px;font-weight:bold;font-size:10px;letter-spacing:1px">实验数据库.dwg</div>
<div class="a" style="left:294px;top:913px;width:1624px;height:4px;background:#f6f6f6"></div>
<div class="a" style="left:294px;top:916px;width:1624px;height:2px;background:#7a7a7a"></div>
<div class="a" style="left:294px;top:918px;width:1624px;height:1px;background:#fff"></div>
<div class="a" style="left:294px;top:917px;width:2px;height:98px;background:#8a8a8a"></div>
<div class="a" style="left:301px;top:926px;width:3px;height:82px;border-left:1px solid #fff;border-right:1px solid #a0a0a0;background:#e4e4e4"></div>
<div class="a" style="left:305px;top:926px;width:3px;height:82px;border-left:1px solid #fff;border-right:1px solid #a0a0a0;background:#e4e4e4"></div>
<div class="a" style="left:311px;top:927px;width:1583px;height:86px;background:#fff;border-top:2px solid #707070;border-left:2px solid #707070"></div>
<div class="t cmd" style="left:314px;top:928px">Inner Join (Select <span style="font-size:13px;letter-spacing:3px;font-family:'Noto Sans CJK SC',sans-serif">物探点号</span>,X<span style="font-size:13px;letter-spacing:3px;font-family:'Noto Sans CJK SC',sans-serif">座标</span> As X1,<span style="font-size:13px;letter-spacing:3px;font-family:'Noto Sans CJK SC',sans-serif">地面高程</span> As H1,Y<span style="font-size:13px;letter-spacing:3px;font-family:'Noto Sans CJK SC',sans-serif">座标</span> As Y1 From GY_POINT  where</div>
<div class="t cmd" style="left:314px;top:941px"><span style="font-size:13px;letter-spacing:3px;font-family:'Noto Sans CJK SC',sans-serif">删除标记</span> is null or <span style="font-size:13px;letter-spacing:3px;font-family:'Noto Sans CJK SC',sans-serif">删除标记</span> &lt;&gt; '<span style="font-size:13px;letter-spacing:3px;font-family:'Noto Sans CJK SC',sans-serif">删除</span>') as B On (A.<span style="font-size:13px;letter-spacing:3px;font-family:'Noto Sans CJK SC',sans-serif">起始物号</span> =   B.<span style="font-size:13px;letter-spacing:3px;font-family:'Noto Sans CJK SC',sans-serif">物探点号</span> )) Inner Join (Select</div>
<div class="t cmd" style="left:314px;top:954px"><span style="font-size:13px;letter-spacing:3px;font-family:'Noto Sans CJK SC',sans-serif">物探点号</span>,X<span style="font-size:13px;letter-spacing:3px;font-family:'Noto Sans CJK SC',sans-serif">座标</span> As X2,<span style="font-size:13px;letter-spacing:3px;font-family:'Noto Sans CJK SC',sans-serif">地面高程</span> As H2,Y<span style="font-size:13px;letter-spacing:3px;font-family:'Noto Sans CJK SC',sans-serif">座标</span> As Y2 From GY_POINT  where <span style="font-size:13px;letter-spacing:3px;font-family:'Noto Sans CJK SC',sans-serif">删除标记</span> is null or <span style="font-size:13px;letter-spacing:3px;font-family:'Noto Sans CJK SC',sans-serif">删除标记</span></div>
<div class="t cmd" style="left:314px;top:967px">&lt;&gt; '<span style="font-size:13px;letter-spacing:3px;font-family:'Noto Sans CJK SC',sans-serif">删除</span>') as C On (A.<span style="font-size:13px;letter-spacing:3px;font-family:'Noto Sans CJK SC',sans-serif">终止物号</span> = C.<span style="font-size:13px;letter-spacing:3px;font-family:'Noto Sans CJK SC',sans-serif">物探点号</span>)</div>
<div class="t cmd" style="left:314px;top:980px"><span style="font-size:13px;letter-spacing:3px;font-family:'Noto Sans CJK SC',sans-serif">类别</span>GY<span style="font-size:13px;letter-spacing:3px;font-family:'Noto Sans CJK SC',sans-serif">数据有错</span>!<span style="font-size:13px;letter-spacing:3px;font-family:'Noto Sans CJK SC',sans-serif">长度统计失败</span>!</div>
<div class="a" style="left:313px;top:995px;width:1578px;height:1px;background:#a0a0a0"></div>
<div class="a" style="left:294px;top:1013px;width:1624px;height:1px;background:#9a9a9a"></div>
<div class="a" style="left:0px;top:1014px;width:1918px;height:1px;background:#fff"></div>
<div class="a" style="left:0;top:1015px;width:1918px;height:23px;background:#f0f0f0"></div>
<div class="a" style="left:3px;top:1018px;width:231px;height:18px;border:1px solid #9a9a9a;border-right-color:#fff;border-bottom-color:#fff"></div>
<div class="t" style="left:5px;top:1022px"><span class="ssl">67621.3611, 7992.4188, 0.0000</span></div>
<div class="a" style="left:239px;top:1018px;width:27px;height:19px;border:1px solid #fff;border-right-color:#a0a0a0;border-bottom-color:#a0a0a0"></div>
<div class="t" style="left:239px;top:1022px;width:27px;text-align:center">捕捉</div>
<div class="a" style="left:271px;top:1018px;width:27px;height:19px;border:1px solid #fff;border-right-color:#a0a0a0;border-bottom-color:#a0a0a0"></div>
<div class="t" style="left:271px;top:1022px;width:27px;text-align:center">栅格</div>
<div class="a" style="left:302px;top:1018px;width:28px;height:19px;border:1px solid #fff;border-right-color:#a0a0a0;border-bottom-color:#a0a0a0"></div>
<div class="t" style="left:302px;top:1022px;width:28px;text-align:center">正交</div>
<div class="a" style="left:334px;top:1018px;width:28px;height:19px;border:1px solid #fff;border-right-color:#a0a0a0;border-bottom-color:#a0a0a0"></div>
<div class="t" style="left:334px;top:1022px;width:28px;text-align:center">极轴</div>
<div class="a" style="left:366px;top:1018px;width:52px;height:19px;border:1px solid #505050;border-right-color:#fff;border-bottom-color:#fff"></div>
<div class="t" style="left:367px;top:1023px;width:52px;text-align:center">对象捕捉</div>
<div class="a" style="left:421px;top:1018px;width:52px;height:19px;border:1px solid #fff;border-right-color:#a0a0a0;border-bottom-color:#a0a0a0"></div>
<div class="t" style="left:421px;top:1022px;width:52px;text-align:center">对象追踪</div>
<div class="a" style="left:478px;top:1018px;width:28px;height:19px;border:1px solid #505050;border-right-color:#fff;border-bottom-color:#fff"></div>
<div class="t" style="left:479px;top:1023px;width:28px;text-align:center"><span class="ssl">DUCS</span></div>
<div class="a" style="left:510px;top:1018px;width:24px;height:19px;border:1px solid #fff;border-right-color:#a0a0a0;border-bottom-color:#a0a0a0"></div>
<div class="t" style="left:510px;top:1022px;width:24px;text-align:center"><span class="ssl">DYN</span></div>
<div class="a" style="left:537px;top:1018px;width:27px;height:19px;border:1px solid #fff;border-right-color:#a0a0a0;border-bottom-color:#a0a0a0"></div>
<div class="t" style="left:537px;top:1022px;width:27px;text-align:center">线宽</div>
<div class="a" style="left:568px;top:1018px;width:29px;height:19px;border:1px solid #505050;border-right-color:#fff;border-bottom-color:#fff"></div>
<div class="t" style="left:569px;top:1023px;width:29px;text-align:center">模型</div>
<div class="t" style="left:1705px;top:1022px">注释比例:</div>
<div class="t" style="left:1768px;top:1022px"><span class="ssl">1:1</span></div>
<svg style="left:1790px;top:1027px" width="8" height="5" viewBox="0 0 8 5"><path d="M0 0h8l-4 4.500z" fill="#000"/></svg>
<svg style="left:1808px;top:1019px" width="18" height="16" viewBox="0 0 18 16"><circle cx="11" cy="5" r="4" fill="#f8e870" stroke="#a89a30" stroke-width=".8"/><path d="M1 14l4-10 4 10M3 11h4" stroke="#1f5aa8" stroke-width="1.500" fill="none"/></svg>
<svg style="left:1832px;top:1019px" width="18" height="16" viewBox="0 0 18 16"><path d="M1 14l4-9 4 9M3 11h4" stroke="#909090" stroke-width="1.500" fill="none"/><path d="M14 2l-6 9" stroke="#a0a0a0" stroke-width="2"/><path d="M12 1l3 4" stroke="#b0b0b0" stroke-width="1.200"/></svg>
<div class="a" style="left:1853px;top:1016px;width:25px;height:21px;border:1px solid #a0a0a0;border-right-color:#fff;border-bottom-color:#fff;background:#f4f4f4"></div>
<svg style="left:1857px;top:1018px" width="18" height="17" viewBox="0 0 18 17"><path d="M8 8V5c0-4 6-4 6 0v1" fill="none" stroke="#a09020" stroke-width="1.800"/><rect x="1" y="7" width="10" height="9" rx="1" fill="#e8d040" stroke="#806a10" stroke-width="1"/><path d="M3 10h6M3 12.500h6" stroke="#806a10" stroke-width=".8"/></svg>
<svg style="left:1882px;top:1026px" width="8" height="5" viewBox="0 0 8 5"><path d="M0 0h8l-4 4.500z" fill="#000"/></svg>
<div class="a" style="left:1897px;top:1017px;width:17px;height:18px;border:2px solid #2a5a9a;background:linear-gradient(135deg,#e8f0fa,#b8cce8)"></div>
<div class="a" style="left:0;top:1037px;width:1918px;height:3px;background:linear-gradient(180deg,#8aa8c8 0,#3a6ea5 40%,#2a5a92 100%)"></div>
<div class="a" style="left:1622px;top:95px;width:270px;height:821px;background:#f0f0f0"></div>
<div class="a" id="attrpanel" style="left:1620px;top:48px;width:269px;height:940px;border:1px solid #8a9aa8;background:linear-gradient(180deg,#f4fbfd 0,#e6f4f8 30px,#f8fcfd 48px,#101010 52px,#000 60px,#000 827px,#7a98a8 832px,#cfe6f0 840px,#eef8fb 100%);box-shadow:0 0 0 1px rgba(255,255,255,.5) inset">
<div class="a" style="left:7px;top:0px;width:253px;height:26px;background:linear-gradient(180deg,#f6fcfe,#e8f6fa)"></div>
<div class="t" style="left:8px;top:6px">属性查询修改...</div>
<div class="a" style="left:244px;top:5px;width:18px;height:18px;border:1px solid #8a8a8a;border-radius:3px;background:#fdfdfd"></div>
<svg style="left:249px;top:10px" width="8" height="8" viewBox="0 0 8 8"><path d="M.5 .5h7v7h-7z" fill="none" stroke="#222" stroke-width="1"/><path d="M1.500 1.500l5 5M6.500 1.500l-5 5" stroke="#222" stroke-width="1.300"/></svg>
<div class="a" style="left:5px;top:26px;width:258px;height:908px;background:#fff;border:1px solid #707880"></div>
<div class="a" style="left:9px;top:30px;width:250px;height:900px;background:#fff;border:1px solid #888;border-right-color:#ddd;border-bottom-color:#ddd"></div>
<div class="a" style="left:10px;top:31px;width:248px;height:898px;border:1px solid #b0b0b0;border-right:none;border-bottom:none"></div>
</div>
<div class="a" style="left:1632px;top:79px;width:109px;height:726px;background:#7a7a7a"></div>
<div class="a" style="left:1633px;top:80px;width:107px;height:24px;background:#f0f0f0"></div>
<div class="a" style="left:1741px;top:80px;width:128px;height:25px;background:#f0f0f0"></div>
<div class="t" style="left:1637px;top:85px">ID</div>
<div class="t" style="left:1745px;top:85px">952</div>
<div class="a" style="left:1633px;top:105px;width:107px;height:24px;background:#f0f0f0"></div>
<div class="a" style="left:1741px;top:105px;width:128px;height:25px;background:#dcd0fc"></div>
<div class="t" style="left:1637px;top:110px">图上点号</div>
<div class="t" style="left:1745px;top:110px">LD27</div>
<div class="a" style="left:1633px;top:130px;width:107px;height:24px;background:#f0f0f0"></div>
<div class="a" style="left:1741px;top:130px;width:128px;height:25px;background:#ecc4a4"></div>
<div class="t" style="left:1637px;top:135px">物探点号</div>
<div class="t" style="left:1745px;top:135px">LD45</div>
<div class="a" style="left:1633px;top:155px;width:107px;height:24px;background:#f0f0f0"></div>
<div class="a" style="left:1741px;top:155px;width:128px;height:25px;background:#c4f4b8"></div>
<div class="t" style="left:1637px;top:160px">管线子类</div>
<div class="a" style="left:1852px;top:155px;width:17px;height:25px;background:#fff"></div>
<div class="a" style="left:1852px;top:155px;width:16px;height:17px;background:#f0f0f0;border:1px solid #fff;border-right-color:#505050;border-bottom-color:#505050;box-shadow:inset -1px -1px 0 #a0a0a0"></div>
<svg style="left:1856px;top:161px" width="8" height="5" viewBox="0 0 8 5"><path d="M0 0h7.500l-3.750 4.500z" fill="#000"/></svg>
<div class="a" style="left:1633px;top:180px;width:107px;height:24px;background:#f0f0f0"></div>
<div class="a" style="left:1741px;top:180px;width:128px;height:25px;background:#a4d8d0"></div>
<div class="t" style="left:1637px;top:185px">管线点编码</div>
<div class="a" style="left:1633px;top:205px;width:107px;height:24px;background:#f0f0f0"></div>
<div class="a" style="left:1741px;top:205px;width:128px;height:25px;background:#f488c8"></div>
<div class="t" style="left:1637px;top:210px">特征</div>
<div class="a" style="left:1852px;top:205px;width:17px;height:25px;background:#fff"></div>
<div class="a" style="left:1852px;top:205px;width:16px;height:17px;background:#f0f0f0;border:1px solid #fff;border-right-color:#505050;border-bottom-color:#505050;box-shadow:inset -1px -1px 0 #a0a0a0"></div>
<svg style="left:1856px;top:211px" width="8" height="5" viewBox="0 0 8 5"><path d="M0 0h7.500l-3.750 4.500z" fill="#000"/></svg>
<div class="a" style="left:1633px;top:230px;width:107px;height:24px;background:#f0f0f0"></div>
<div class="a" style="left:1741px;top:230px;width:128px;height:25px;background:#dce0c8"></div>
<div class="t" style="left:1637px;top:235px">附属物</div>
<div class="t" style="left:1745px;top:235px">路灯</div>
<div class="a" style="left:1852px;top:230px;width:17px;height:25px;background:#fff"></div>
<div class="a" style="left:1852px;top:230px;width:16px;height:17px;background:#f0f0f0;border:1px solid #fff;border-right-color:#505050;border-bottom-color:#505050;box-shadow:inset -1px -1px 0 #a0a0a0"></div>
<svg style="left:1856px;top:236px" width="8" height="5" viewBox="0 0 8 5"><path d="M0 0h7.500l-3.750 4.500z" fill="#000"/></svg>
<div class="a" style="left:1633px;top:255px;width:107px;height:24px;background:#f0f0f0"></div>
<div class="a" style="left:1741px;top:255px;width:128px;height:25px;background:#a898c0"></div>
<div class="t" style="left:1637px;top:260px">型号</div>
<div class="a" style="left:1633px;top:280px;width:107px;height:24px;background:#f0f0f0"></div>
<div class="a" style="left:1741px;top:280px;width:128px;height:25px;background:#f8d888"></div>
<div class="t" style="left:1637px;top:285px">规格</div>
<div class="a" style="left:1633px;top:305px;width:107px;height:24px;background:#f0f0f0"></div>
<div class="a" style="left:1741px;top:305px;width:128px;height:25px;background:#c4d0b0"></div>
<div class="t" style="left:1637px;top:310px">X座标</div>
<div class="t" style="left:1745px;top:310px">7990.263</div>
<div class="a" style="left:1633px;top:330px;width:107px;height:24px;background:#f0f0f0"></div>
<div class="a" style="left:1741px;top:330px;width:128px;height:25px;background:#ecccc8"></div>
<div class="t" style="left:1637px;top:335px">Y座标</div>
<div class="t" style="left:1745px;top:335px">67627.914</div>
<div class="a" style="left:1633px;top:355px;width:107px;height:24px;background:#f0f0f0"></div>
<div class="a" style="left:1741px;top:355px;width:128px;height:25px;background:#ecc8d0"></div>
<div class="t" style="left:1637px;top:360px">地面高程</div>
<div class="t" style="left:1745px;top:360px">294.621</div>
<div class="a" style="left:1633px;top:380px;width:107px;height:24px;background:#f0f0f0"></div>
<div class="a" style="left:1741px;top:380px;width:128px;height:25px;background:#88a0f8"></div>
<div class="t" style="left:1637px;top:385px">井底深</div>
<div class="a" style="left:1633px;top:405px;width:107px;height:24px;background:#f0f0f0"></div>
<div class="a" style="left:1741px;top:405px;width:128px;height:25px;background:#90c0e4"></div>
<div class="t" style="left:1637px;top:410px">偏心井位</div>
<div class="a" style="left:1633px;top:430px;width:107px;height:24px;background:#f0f0f0"></div>
<div class="a" style="left:1741px;top:430px;width:128px;height:25px;background:#ecbcb0"></div>
<div class="t" style="left:1637px;top:435px">角度</div>
<div class="a" style="left:1633px;top:455px;width:107px;height:24px;background:#f0f0f0"></div>
<div class="a" style="left:1741px;top:455px;width:128px;height:25px;background:#a890a8"></div>
<div class="t" style="left:1637px;top:460px">综合图点号X座标</div>
<div class="a" style="left:1633px;top:480px;width:107px;height:24px;background:#f0f0f0"></div>
<div class="a" style="left:1741px;top:480px;width:128px;height:25px;background:#d888c0"></div>
<div class="t" style="left:1637px;top:485px">综合图点号Y座标</div>
<div class="a" style="left:1633px;top:505px;width:107px;height:24px;background:#f0f0f0"></div>
<div class="a" style="left:1741px;top:505px;width:128px;height:25px;background:#8888a8"></div>
<div class="t" style="left:1637px;top:510px">专业图点号X座标</div>
<div class="a" style="left:1633px;top:530px;width:107px;height:24px;background:#f0f0f0"></div>
<div class="a" style="left:1741px;top:530px;width:128px;height:25px;background:#b08898"></div>
<div class="t" style="left:1637px;top:535px">专业图点号Y座标</div>
<div class="a" style="left:1633px;top:555px;width:107px;height:24px;background:#f0f0f0"></div>
<div class="a" style="left:1741px;top:555px;width:128px;height:25px;background:#9c8cf8"></div>
<div class="t" style="left:1637px;top:560px">权属单位名</div>
<div class="t" style="left:1745px;top:560px">沂源县路灯管理处</div>
<div class="a" style="left:1852px;top:555px;width:17px;height:25px;background:#fff"></div>
<div class="a" style="left:1852px;top:555px;width:16px;height:17px;background:#f0f0f0;border:1px solid #fff;border-right-color:#505050;border-bottom-color:#505050;box-shadow:inset -1px -1px 0 #a0a0a0"></div>
<svg style="left:1856px;top:561px" width="8" height="5" viewBox="0 0 8 5"><path d="M0 0h7.500l-3.750 4.500z" fill="#000"/></svg>
<div class="a" style="left:1633px;top:580px;width:107px;height:24px;background:#f0f0f0"></div>
<div class="a" style="left:1741px;top:580px;width:128px;height:25px;background:#c09098"></div>
<div class="t" style="left:1637px;top:585px">道路代码</div>
<div class="t" style="left:1745px;top:585px">沿河东路</div>
<div class="a" style="left:1852px;top:580px;width:17px;height:25px;background:#fff"></div>
<div class="a" style="left:1852px;top:580px;width:16px;height:17px;background:#f0f0f0;border:1px solid #fff;border-right-color:#505050;border-bottom-color:#505050;box-shadow:inset -1px -1px 0 #a0a0a0"></div>
<svg style="left:1856px;top:586px" width="8" height="5" viewBox="0 0 8 5"><path d="M0 0h7.500l-3.750 4.500z" fill="#000"/></svg>
<div class="a" style="left:1633px;top:605px;width:107px;height:24px;background:#f0f0f0"></div>
<div class="a" style="left:1741px;top:605px;width:128px;height:25px;background:#c4e09c"></div>
<div class="t" style="left:1637px;top:610px">埋设年代</div>
<div class="a" style="left:1633px;top:630px;width:107px;height:24px;background:#f0f0f0"></div>
<div class="a" style="left:1741px;top:630px;width:128px;height:25px;background:#a8e8fc"></div>
<div class="t" style="left:1637px;top:635px">点符号编码</div>
<div class="t" style="left:1745px;top:635px">50</div>
<div class="a" style="left:1633px;top:655px;width:107px;height:24px;background:#f0f0f0"></div>
<div class="a" style="left:1741px;top:655px;width:128px;height:25px;background:#88a898"></div>
<div class="t" style="left:1637px;top:660px">图幅号</div>
<div class="t" style="left:1745px;top:660px">7.50-67.50</div>
<div class="a" style="left:1633px;top:680px;width:107px;height:24px;background:#f0f0f0"></div>
<div class="a" style="left:1741px;top:680px;width:128px;height:25px;background:#d8b8c4"></div>
<div class="t" style="left:1637px;top:685px">图元标识码</div>
<div class="a" style="left:1633px;top:705px;width:107px;height:24px;background:#f0f0f0"></div>
<div class="a" style="left:1741px;top:705px;width:128px;height:25px;background:#e898c0"></div>
<div class="t" style="left:1637px;top:710px">辅助类型</div>
<div class="a" style="left:1852px;top:705px;width:17px;height:25px;background:#fff"></div>
<div class="a" style="left:1852px;top:705px;width:16px;height:17px;background:#f0f0f0;border:1px solid #fff;border-right-color:#505050;border-bottom-color:#505050;box-shadow:inset -1px -1px 0 #a0a0a0"></div>
<svg style="left:1856px;top:711px" width="8" height="5" viewBox="0 0 8 5"><path d="M0 0h7.500l-3.750 4.500z" fill="#000"/></svg>
<div class="a" style="left:1633px;top:730px;width:107px;height:24px;background:#f0f0f0"></div>
<div class="a" style="left:1741px;top:730px;width:128px;height:25px;background:#d0a0d8"></div>
<div class="t" style="left:1637px;top:735px">删除标记</div>
<div class="a" style="left:1633px;top:755px;width:107px;height:24px;background:#f0f0f0"></div>
<div class="a" style="left:1741px;top:755px;width:128px;height:25px;background:#b890d8"></div>
<div class="t" style="left:1637px;top:760px">备注</div>
<div class="a" style="left:1852px;top:755px;width:17px;height:25px;background:#fff"></div>
<div class="a" style="left:1852px;top:755px;width:16px;height:17px;background:#f0f0f0;border:1px solid #fff;border-right-color:#505050;border-bottom-color:#505050;box-shadow:inset -1px -1px 0 #a0a0a0"></div>
<svg style="left:1856px;top:761px" width="8" height="5" viewBox="0 0 8 5"><path d="M0 0h7.500l-3.750 4.500z" fill="#000"/></svg>
<div class="a" style="left:1633px;top:780px;width:107px;height:24px;background:#f0f0f0"></div>
<div class="a" style="left:1741px;top:780px;width:128px;height:25px;background:#d8d0a8"></div>
<div class="t" style="left:1637px;top:785px">EXPNO</div>
<div class="a" style="left:1740px;top:104px;width:129px;height:1px;background:#909090"></div>
<div class="a" style="left:1893px;top:928px;width:23px;height:68px;background:#f0f0f0;border-left:1px solid #e0e0e0"></div>
<svg style="left:1899px;top:934px" width="9" height="6" viewBox="0 0 9 6"><path d="M0 5.500h9L4.500 .5z" fill="#555"/></svg>
<div class="a" style="left:1896px;top:962px;width:15px;height:14px;background:linear-gradient(90deg,#f4f4f4,#d8d8d8);border:1px solid #989898;border-radius:2px"></div>
<svg style="left:1899px;top:984px" width="9" height="6" viewBox="0 0 9 6"><path d="M0 .5h9L4.500 5.500z" fill="#555"/></svg>
<div class="a" style="left:1825px;top:996px;width:68px;height:17px;background:#f0f0f0"></div>
<svg style="left:1832px;top:1001px" width="6" height="9" viewBox="0 0 6 9"><path d="M5.500 0v9L.5 4.500z" fill="#555"/></svg>
<div class="a" style="left:1845px;top:998px;width:16px;height:14px;background:linear-gradient(180deg,#f4f4f4,#d8d8d8);border:1px solid #989898;border-radius:2px"></div>
<svg style="left:1882px;top:1001px" width="6" height="9" viewBox="0 0 6 9"><path d="M.5 0v9l5-4.500z" fill="#555"/></svg>
<div class="a" id="dlg" style="left:636px;top:282px;width:647px;height:469px;border-radius:7px 7px 3px 3px;background:linear-gradient(180deg,#1a1c20 0%,#0c0d10 10px,#08090b 28px,#050506 100%);border:1px solid #a8a8a8;box-shadow:inset 0 0 0 1px #2a2a2a,0 0 0 1px #000;overflow:hidden">
<div class="a" style="left:-30px;top:-8px;width:150px;height:42px;background:radial-gradient(ellipse 50% 50% at 50% 50%,rgba(225,228,232,.9) 0%,rgba(190,192,198,.8) 35%,rgba(110,112,118,.45) 65%,rgba(20,22,26,0) 100%)"></div>
<div class="a" style="left:440px;top:0;width:207px;height:28px;background:linear-gradient(90deg,rgba(120,124,130,0) 0%,rgba(120,124,130,.25) 50%,rgba(150,154,160,.5) 100%)"></div>
<svg style="left:6px;top:6px" width="16" height="16" viewBox="0 0 16 16"><rect x="0" y="0" width="16" height="16" fill="#e8f8f4"/><rect x="1" y="1" width="14" height="14" fill="#1f9a8a"/><path d="M2 9l3-6 3 6M3 7h4M10 2v8M13 2v8M2 12h6M2 14h5" stroke="#fff" stroke-width="1.300" fill="none"/><rect x="9.500" y="10.500" width="4" height="4" fill="#fff" stroke="#0a4a40" stroke-width=".8"/></svg>
<div class="t" style="left:27px;top:6px;color:#101010">数据统计...</div>
<div class="a" style="left:593px;top:-2px;width:48px;height:20px;border:1px solid #3a1a16;border-radius:0 0 5px 5px;background:linear-gradient(180deg,#e2a090 0%,#cf6a55 45%,#b82a14 50%,#c84a28 80%,#e07a48 100%);box-shadow:0 0 0 1px rgba(255,255,255,.4)"></div>
<div class="t" style="left:593px;top:0px;width:48px;text-align:center;font-weight:bold;font-size:15px;color:#fff;text-shadow:0 0 2px #300;line-height:15px">x</div>
</div>
<div class="a" style="left:642px;top:310px;width:635px;height:435px;background:#f0f0f0;border:1px solid #b8bcc4"></div>
<div class="a" style="left:644px;top:311px;width:632px;height:49px;background:linear-gradient(90deg,#f2f2ff 0%,#e2e0fe 35%,#cfccfd 70%,#bfbcfc 100%)"></div>
<div class="a" style="left:644px;top:359px;width:632px;height:2px;background:#16164a"></div>
<svg style="left:648px;top:320px" width="32" height="32" viewBox="0 0 32 32"><rect width="32" height="32" fill="#c4c4c4"/><circle cx="11" cy="18" r="10" fill="#ffff00" stroke="#000" stroke-width="1"/><rect x="15" y="14" width="14" height="15" fill="#f000f0" stroke="#000" stroke-width="1"/><path d="M15 14h5.800A10 10 0 0 1 15 27z" fill="#e01020" stroke="#000" stroke-width=".8"/><path d="M16 1l13 5-19 8z" fill="#00e8f0" stroke="#000" stroke-width=".8"/><path d="M15 6l4 4-9 4z" fill="#20d040"/></svg>
<div class="t" style="left:685px;top:314px;font-size:15px;line-height:18px;height:18px;letter-spacing:.3px;color:#000">统计分析</div>
<div class="t" style="left:689px;top:340px">由当前数据库或图形对管线进行统计分析。</div>
<div class="a" style="left:644px;top:361px;width:632px;height:25px;background:linear-gradient(180deg,#ffffff 0%,#eef4fd 50%,#c9dcf8 100%)"></div>
<div class="a" style="left:646px;top:362px;width:82px;height:24px;border:1px solid #1a2a6a;border-bottom:none;border-radius:4px 4px 0 0;background:linear-gradient(180deg,#ffeedd 0%,#ffdcb4 50%,#ffc07a 100%)"></div>
<div class="a" style="left:727px;top:362px;width:83px;height:23px;border:1px solid #1a2a6a;border-bottom:none;border-radius:4px 4px 0 0;background:linear-gradient(180deg,#e4edfc 0%,#cfdffa 50%,#8fb2ee 100%)"></div>
<div class="a" style="left:727px;top:385px;width:549px;height:1px;background:#1a2a6a"></div>
<svg style="left:653px;top:365px" width="16" height="16" viewBox="0 0 16 16"><rect x="0" y="0" width="16" height="4" fill="#2828c8"/><path d="M2 0v2M5 0v2M8 0v2M11 0v2" stroke="#fff" stroke-width="1.500"/><rect x="0" y="5" width="16" height="2" fill="#d070e0"/><rect x="0" y="8.500" width="16" height="2" fill="#e05030"/><rect x="0" y="12" width="16" height="3" fill="#f0e860"/></svg>
<div class="t" style="left:672px;top:367px">类别范围</div>
<svg style="left:734px;top:365px" width="16" height="16" viewBox="0 0 16 16"><rect width="16" height="16" fill="#c0c0c0"/><path d="M8 1l4 3-4 3-3-3z" fill="#702090"/><circle cx="3.500" cy="8.500" r="2.500" fill="#1010d0"/><rect x="9" y="7" width="5" height="4" fill="#207020"/><circle cx="8" cy="12.500" r="2.800" fill="#e01010"/><path d="M4 5l8 8M12 5l-8 8" stroke="#000" stroke-width="1.600"/></svg>
<div class="t" style="left:754px;top:367px">查询方式</div>
<div class="a" style="left:644px;top:386px;width:632px;height:325px;background:#c3d9f7"></div>
<div class="a" style="left:647px;top:388px;width:619px;height:317px;background:#f0f0f0"></div>
<div class="a" style="left:1266px;top:388px;width:7px;height:317px;background:linear-gradient(90deg,#e4eefc,#bcd4f6)"></div>
<div class="a" style="left:652px;top:399px;width:206px;height:113px;border:1px solid #d5dfe5;border-radius:3px"></div><div class="t" style="left:660px;top:391px;background:#f0f0f0;padding:0 1px">请选择统计类别</div>
<div class="t" style="left:659px;top:406px">存在的类别代码</div>
<div class="t" style="left:766px;top:406px">选定的类别代码</div>
<div class="a" style="left:659px;top:422px;width:72px;height:89px;background:#fff;border:1px solid #828790"></div>
<div class="a" style="left:741px;top:423px;width:27px;height:19px;border:1px solid #707070;border-radius:3px;background:linear-gradient(180deg,#f2f2f2 0%,#ebebeb 48%,#dddddd 52%,#cfcfcf 100%);box-shadow:inset 0 0 0 1px #fcfcfc"></div><div class="t" style="left:741px;top:425px;width:27px;text-align:center;color:#000"><span style="font-family:Liberation Mono,monospace;font-size:13px;letter-spacing:-2px;margin-left:-2px">&gt;&gt;</span></div>
<div class="a" style="left:741px;top:446px;width:27px;height:19px;border:1px solid #707070;border-radius:3px;background:linear-gradient(180deg,#f2f2f2 0%,#ebebeb 48%,#dddddd 52%,#cfcfcf 100%);box-shadow:inset 0 0 0 1px #fcfcfc"></div><div class="t" style="left:741px;top:448px;width:27px;text-align:center;color:#000"><span style="font-family:Liberation Mono,monospace;font-size:13px;letter-spacing:-2px;margin-left:-2px">&gt;</span></div>
<div class="a" style="left:741px;top:468px;width:27px;height:19px;border:1px solid #707070;border-radius:3px;background:linear-gradient(180deg,#f2f2f2 0%,#ebebeb 48%,#dddddd 52%,#cfcfcf 100%);box-shadow:inset 0 0 0 1px #fcfcfc"></div><div class="t" style="left:741px;top:470px;width:27px;text-align:center;color:#000"><span style="font-family:Liberation Mono,monospace;font-size:13px;letter-spacing:-2px;margin-left:-2px">&lt;</span></div>
<div class="a" style="left:741px;top:491px;width:27px;height:19px;border:1px solid #707070;border-radius:3px;background:linear-gradient(180deg,#f2f2f2 0%,#ebebeb 48%,#dddddd 52%,#cfcfcf 100%);box-shadow:inset 0 0 0 1px #fcfcfc"></div><div class="t" style="left:741px;top:493px;width:27px;text-align:center;color:#000"><span style="font-family:Liberation Mono,monospace;font-size:13px;letter-spacing:-2px;margin-left:-2px">&lt;&lt;</span></div>
<div class="a" style="left:775px;top:421px;width:72px;height:89px;background:#fff;border:1px solid #828790"></div>
<div class="t" style="left:779px;top:422px"><span class="ssl">YY</span></div>
<div class="t" style="left:779px;top:434px"><span class="ssl">YS</span></div>
<div class="t" style="left:779px;top:446px"><span class="ssl">WS</span></div>
<div class="t" style="left:779px;top:458px"><span class="ssl">HS</span></div>
<div class="t" style="left:779px;top:470px"><span class="ssl">RQ</span></div>
<div class="t" style="left:779px;top:482px"><span class="ssl">TR</span></div>
<div class="t" style="left:779px;top:494px"><span class="ssl">ZQ</span></div>
<div class="a" style="left:829px;top:422px;width:17px;height:87px;background:#f0f0f0"></div>
<svg style="left:833px;top:429px" width="9" height="5" viewBox="0 0 9 5"><path d="M0 5h9L4.500 0z" fill="#505050"/></svg>
<div class="a" style="left:830px;top:441px;width:14px;height:17px;border:1px solid #979797;border-radius:2px;background:linear-gradient(90deg,#f6f6f6,#dcdcdc)"></div>
<svg style="left:833px;top:445px" width="8" height="8" viewBox="0 0 8 8"><path d="M0 1.500h7M0 4h7M0 6.500h7" stroke="#606060" stroke-width="1"/></svg>
<svg style="left:833px;top:497px" width="9" height="5" viewBox="0 0 9 5"><path d="M0 0h9L4.500 5z" fill="#505050"/></svg>
<div class="a" style="left:652px;top:525px;width:206px;height:21px;border:1px solid #d5dfe5;border-radius:3px"></div><div class="t" style="left:660px;top:517px;background:#f0f0f0;padding:0 1px">范围选择方式</div>
<div class="a" style="left:667px;top:533px;width:12px;height:12px;border-radius:6px;border:1px solid #8e8f8f;background:radial-gradient(circle at 35% 35%,#fff,#fdfdfd 60%,#d8d8d8)"></div><div class="a" style="left:670px;top:536px;width:6px;height:6px;border-radius:3px;background:radial-gradient(circle at 35% 35%,#6fc4f0,#1c64a8 70%)"></div>
<div class="t" style="left:685px;top:532px">当前数据库</div>
<div class="a" style="left:769px;top:533px;width:12px;height:12px;border-radius:6px;border:1px solid #8e8f8f;background:radial-gradient(circle at 35% 35%,#fff,#fdfdfd 60%,#d8d8d8)"></div>
<div class="t" style="left:786px;top:532px">图形选择集</div>
<div class="a" style="left:652px;top:556px;width:206px;height:70px;border:1px solid #d5dfe5;border-radius:3px"></div><div class="t" style="left:660px;top:548px;background:#f0f0f0;padding:0 1px">选择集选取方式</div>
<div class="a" style="left:664px;top:563px;width:12px;height:12px;border-radius:6px;border:1px solid #b8b8b8;background:radial-gradient(circle at 35% 35%,#fff,#e8e8e8 60%,#d8d8d8)"></div><div class="a" style="left:667px;top:566px;width:6px;height:6px;border-radius:3px;background:radial-gradient(circle at 35% 35%,#d0d0d0,#a8a8a8 70%)"></div>
<div class="t" style="left:680px;top:562px;color:#7a7a7a">指定</div>
<div class="a" style="left:728px;top:563px;width:12px;height:12px;border-radius:6px;border:1px solid #b8b8b8;background:radial-gradient(circle at 35% 35%,#fff,#e8e8e8 60%,#d8d8d8)"></div>
<div class="t" style="left:744px;top:562px;color:#7a7a7a">窗口</div>
<div class="a" style="left:790px;top:563px;width:12px;height:12px;border-radius:6px;border:1px solid #b8b8b8;background:radial-gradient(circle at 35% 35%,#fff,#e8e8e8 60%,#d8d8d8)"></div>
<div class="t" style="left:806px;top:562px;color:#7a7a7a">多边形</div>
<div class="a" style="left:732px;top:606px;width:57px;height:18px;border:1px solid #adb2b5;border-radius:3px;background:linear-gradient(180deg,#f2f2f2 0%,#ebebeb 48%,#dddddd 52%,#cfcfcf 100%);box-shadow:inset 0 0 0 1px #fcfcfc"></div><div class="t" style="left:732px;top:608px;width:57px;text-align:center;color:#838383">选择</div>
<div class="a" style="left:652px;top:637px;width:206px;height:60px;border:1px solid #d5dfe5;border-radius:3px"></div><div class="t" style="left:660px;top:629px;background:#f0f0f0;padding:0 1px">分类统计方式</div>
<div class="a" style="left:659px;top:644px;width:12px;height:12px;border-radius:6px;border:1px solid #8e8f8f;background:radial-gradient(circle at 35% 35%,#fff,#fdfdfd 60%,#d8d8d8)"></div><div class="a" style="left:662px;top:647px;width:6px;height:6px;border-radius:3px;background:radial-gradient(circle at 35% 35%,#6fc4f0,#1c64a8 70%)"></div>
<div class="t" style="left:675px;top:643px">线表长度统计</div>
<div class="a" style="left:763px;top:644px;width:12px;height:12px;border-radius:6px;border:1px solid #8e8f8f;background:radial-gradient(circle at 35% 35%,#fff,#fdfdfd 60%,#d8d8d8)"></div>
<div class="t" style="left:779px;top:643px">点表点数统计</div>
<div class="a" style="left:656px;top:661px;width:197px;height:20px;border:1px solid #2c628b;border-radius:3px;background:linear-gradient(180deg,#e5f4fc 0%,#c4e5f6 48%,#98d1ef 52%,#68b3db 100%);box-shadow:inset 0 0 0 1px rgba(255,255,255,.6)"></div>
<div class="t" style="left:659px;top:664px">管径断面</div>
<svg style="left:840px;top:669px" width="8" height="5" viewBox="0 0 8 5"><path d="M0 0h8L4 4.500z" fill="#000"/></svg>
<div class="a" style="left:644px;top:711px;width:632px;height:34px;background:#f0f0f0"></div>
<div class="t" style="left:837px;top:724px">统计</div>
<svg style="left:930px;top:721px" width="20" height="20" viewBox="0 0 20 20"><rect x="1" y="1" width="18" height="18" fill="#2020a0"/><rect x="3" y="1" width="14" height="4" fill="#f8f000"/><rect x="3" y="5" width="14" height="4" fill="#e01030"/><rect x="4" y="12" width="12" height="7" fill="#c8c8c8"/><rect x="6" y="13" width="3" height="5" fill="#2020a0"/></svg>
<div class="t" style="left:964px;top:724px">保存</div>
<svg style="left:1057px;top:720px" width="23" height="23" viewBox="0 0 23 23"><path d="M3 4l4-1 5 6 6-7 4 1-8 9 6 9-4 1-5-7-6 7-4-1 8-9z" fill="#888" transform="translate(1.500,1.500)"/><path d="M3 4l4-1 5 6 6-7 4 1-8 9 6 9-4 1-5-7-6 7-4-1 8-9z" fill="#e81010"/></svg>
<div class="t" style="left:1090px;top:724px">退出</div>
<div class="a" style="left:865px;top:397px;width:398px;height:281px;background:#fff;border:1px solid #6a6a6a;border-right-color:#e8e8e8;border-bottom-color:#e8e8e8;box-shadow:inset 1px 1px 0 #404040;overflow:hidden">
<div class="a" style="left:1px;top:1px;width:381px;height:18px;background:#f0f0f0;"></div>
<div class="a" style="left:91px;top:1px;width:1px;height:18px;background:#000;"></div>
<div class="t" style="left:1px;top:3px;width:90px;text-align:center;">管线类型</div>
<div class="a" style="left:149px;top:1px;width:1px;height:18px;background:#000;"></div>
<div class="t" style="left:92px;top:3px;width:57px;text-align:center;font-weight:bold;">属性</div>
<div class="a" style="left:212px;top:1px;width:1px;height:18px;background:#000;"></div>
<div class="t" style="left:150px;top:3px;width:62px;text-align:center;font-weight:bold;">分类</div>
<div class="a" style="left:277px;top:1px;width:1px;height:18px;background:#000;"></div>
<div class="t" style="left:213px;top:3px;width:64px;text-align:center;">长度<span style="letter-spacing:-1px">(米)</span></div>
<div class="a" style="left:354px;top:1px;width:1px;height:18px;background:#000;"></div>
<div class="t" style="left:278px;top:3px;width:76px;text-align:center;">总长度<span style="letter-spacing:-1px">(米)</span></div>
<div class="a" style="left:433px;top:1px;width:1px;height:18px;background:#000;"></div>
<div class="t" style="left:361px;top:3px;">合计</div>
<div class="a" style="left:1px;top:18px;width:381px;height:1px;background:#000;"></div>
<div class="a" style="left:1px;top:19px;width:90px;height:245px;background:#f0f0f0;"></div>
<div class="a" style="left:91px;top:19px;width:1px;height:245px;background:#000;"></div>
<div class="t" style="left:153px;top:20.5px;"><span class="ssl">150</span></div>
<div class="t" style="left:216px;top:20.5px;"><span class="ssl">1186.932</span></div>
<div class="a" style="left:150px;top:36px;width:128px;height:1px;background:#c0c0c0;"></div>
<div class="t" style="left:153px;top:38.5px;"><span class="ssl">200</span></div>
<div class="t" style="left:216px;top:38.5px;"><span class="ssl">1882.486</span></div>
<div class="a" style="left:150px;top:54px;width:128px;height:1px;background:#c0c0c0;"></div>
<div class="t" style="left:153px;top:56.5px;"><span class="ssl">250</span></div>
<div class="t" style="left:216px;top:56.5px;"><span class="ssl">861.831</span></div>
<div class="a" style="left:150px;top:72px;width:128px;height:1px;background:#c0c0c0;"></div>
<div class="t" style="left:153px;top:74.5px;"><span class="ssl">300</span></div>
<div class="t" style="left:216px;top:74.5px;"><span class="ssl">96.421</span></div>
<div class="a" style="left:150px;top:90px;width:128px;height:1px;background:#c0c0c0;"></div>
<div class="t" style="left:153px;top:92.5px;"><span class="ssl">315</span></div>
<div class="t" style="left:216px;top:92.5px;"><span class="ssl">736.809</span></div>
<div class="a" style="left:150px;top:108px;width:128px;height:1px;background:#c0c0c0;"></div>
<div class="t" style="left:153px;top:110.5px;"><span class="ssl">400</span></div>
<div class="t" style="left:216px;top:110.5px;"><span class="ssl">803.675</span></div>
<div class="a" style="left:150px;top:126px;width:128px;height:1px;background:#c0c0c0;"></div>
<div class="t" style="left:153px;top:128.5px;"><span class="ssl">50</span></div>
<div class="t" style="left:216px;top:128.5px;"><span class="ssl">784.901</span></div>
<div class="a" style="left:150px;top:144px;width:128px;height:1px;background:#c0c0c0;"></div>
<div class="t" style="left:153px;top:146.5px;"><span class="ssl">600</span></div>
<div class="t" style="left:216px;top:146.5px;"><span class="ssl">3352.510</span></div>
<div class="a" style="left:150px;top:162px;width:128px;height:1px;background:#c0c0c0;"></div>
<div class="a" style="left:150px;top:163px;width:63px;height:90px;background:#b0d6fb;"></div>
<div class="t" style="left:153px;top:164.5px;color:#103060"><span class="ssl">1200</span></div>
<div class="t" style="left:216px;top:164.5px;"><span class="ssl">390.773</span></div>
<div class="a" style="left:150px;top:180px;width:128px;height:1px;background:#c0c0c0;"></div>
<div class="t" style="left:153px;top:182.5px;color:#103060"><span class="ssl">2000X2500</span></div>
<div class="t" style="left:216px;top:182.5px;"><span class="ssl">646.281</span></div>
<div class="a" style="left:150px;top:198px;width:128px;height:1px;background:#c0c0c0;"></div>
<div class="t" style="left:153px;top:200.5px;color:#103060"><span class="ssl">30</span></div>
<div class="t" style="left:216px;top:200.5px;"><span class="ssl">1.986</span></div>
<div class="a" style="left:150px;top:216px;width:128px;height:1px;background:#c0c0c0;"></div>
<div class="t" style="left:153px;top:218.5px;color:#103060"><span class="ssl">300</span></div>
<div class="t" style="left:216px;top:218.5px;"><span class="ssl">1934.647</span></div>
<div class="a" style="left:150px;top:234px;width:128px;height:1px;background:#c0c0c0;"></div>
<div class="t" style="left:153px;top:236.5px;color:#103060"><span class="ssl">600</span></div>
<div class="t" style="left:216px;top:236.5px;"><span class="ssl">943.684</span></div>
<div class="a" style="left:150px;top:252px;width:128px;height:1px;background:#c0c0c0;"></div>
<div class="t" style="left:153px;top:254.5px;"><span class="ssl">400</span></div>
<div class="t" style="left:216px;top:254.5px;"><span class="ssl">564.763</span></div>
<div class="t" style="left:281px;top:254.5px;"><span class="ssl">564.763</span></div>
<div class="a" style="left:149px;top:19px;width:1px;height:245px;background:#c0c0c0;"></div>
<div class="a" style="left:212px;top:19px;width:1px;height:245px;background:#c0c0c0;"></div>
<div class="a" style="left:277px;top:19px;width:1px;height:245px;background:#c0c0c0;"></div>
<div class="a" style="left:354px;top:19px;width:1px;height:245px;background:#c0c0c0;"></div>
<div class="a" style="left:92px;top:162px;width:290px;height:1px;background:#c0c0c0;"></div>
<div class="a" style="left:92px;top:252px;width:290px;height:1px;background:#c0c0c0;"></div>
<div class="a" style="left:1px;top:162px;width:91px;height:1px;background:#000;"></div>
<div class="a" style="left:1px;top:252px;width:91px;height:1px;background:#000;"></div>
<div class="t" style="left:1px;top:76px;width:90px;text-align:center">饮用水<span class="ssl">(YY)</span></div>
<div class="t" style="left:94px;top:75px;">管径断面</div>
<div class="t" style="left:281px;top:74.5px;"><span class="ssl">10342.243</span></div>
<div class="t" style="left:1px;top:201px;width:90px;text-align:center;font-weight:bold">雨水<span class="ssl">(YS)</span></div>
<div class="t" style="left:94px;top:201px;">管径断面</div>
<div class="t" style="left:281px;top:200.5px;"><span class="ssl">3917.372</span></div>
<div class="t" style="left:1px;top:255px;width:90px;text-align:center">污水<span class="ssl">(WS)</span></div>
<div class="t" style="left:94px;top:255px;">管径断面</div>
<div class="a" style="left:91px;top:162px;width:122px;height:2px;background:#000;"></div>
<div class="a" style="left:91px;top:162px;width:2px;height:91px;background:#000;"></div>
<div class="a" style="left:91px;top:251px;width:122px;height:2px;background:#000;"></div>
<div class="a" style="left:211px;top:162px;width:2px;height:91px;background:#000;"></div>
<div class="a" style="left:381px;top:1px;width:16px;height:262px;background:#f0f0f0;"></div>
<svg style="left:385px;top:7px" width="8" height="5" viewBox="0 0 8 5"><path d="M0 5h8L4 0z" fill="#505050"/></svg>
<div class="a" style="left:382px;top:21px;width:13px;height:36px;background:linear-gradient(90deg,#f6f6f6,#dadada);border:1px solid #979797;border-radius:2px"></div>
<svg style="left:385px;top:35px" width="8" height="8" viewBox="0 0 8 8"><path d="M0 1.500h7M0 4h7M0 6.500h7" stroke="#606060" stroke-width="1"/></svg>
<svg style="left:385px;top:253px" width="8" height="5" viewBox="0 0 8 5"><path d="M0 0h8L4 5z" fill="#505050"/></svg>
<div class="a" style="left:1px;top:263px;width:396px;height:17px;background:#f0f0f0;"></div>
<svg style="left:7px;top:267px" width="5" height="8" viewBox="0 0 5 8"><path d="M5 0v8L0 4z" fill="#505050"/></svg>
<div class="a" style="left:19px;top:264px;width:170px;height:15px;background:linear-gradient(180deg,#f6f6f6,#dadada);border:1px solid #979797;border-radius:2px"></div>
<svg style="left:99px;top:268px" width="8" height="8" viewBox="0 0 8 8"><path d="M1.500 0v7M4 0v7M6.500 0v7" stroke="#606060" stroke-width="1"/></svg>
<svg style="left:368px;top:267px" width="5" height="8" viewBox="0 0 5 8"><path d="M0 0v8l5-4z" fill="#505050"/></svg>
</div>
<div class="a" style="left:656px;top:682px;width:197px;height:360px;background:#fff;border:1px solid #000;border-top:none;overflow:hidden">
<div class="t" style="left:2px;top:-1px;line-height:14px">管线编码</div>
<div class="t" style="left:2px;top:11px;line-height:14px">起始物号</div>
<div class="t" style="left:2px;top:23px;line-height:14px">终止物号</div>
<div class="t" style="left:2px;top:35px;line-height:14px">起始埋深</div>
<div class="t" style="left:2px;top:47px;line-height:14px">终止埋深</div>
<div class="t" style="left:2px;top:59px;line-height:14px">埋设方式</div>
<div class="t" style="left:2px;top:71px;line-height:14px">管线材料</div>
<div class="a" style="left:0;top:84px;width:179px;height:12px;background:#3399ff"></div>
<div class="t" style="left:2px;top:83px;color:#fff;line-height:14px">管径断面</div>
<div class="t" style="left:2px;top:95px;line-height:14px">压力</div>
<div class="t" style="left:2px;top:107px;line-height:14px">流向</div>
<div class="t" style="left:2px;top:119px;line-height:14px">电压</div>
<div class="t" style="left:2px;top:131px;line-height:14px">套管尺寸</div>
<div class="t" style="left:2px;top:143px;line-height:14px">电缆条数</div>
<div class="t" style="left:2px;top:155px;line-height:14px">总孔数</div>
<div class="t" style="left:2px;top:167px;line-height:14px">已用孔数</div>
<div class="t" style="left:2px;top:179px;line-height:14px">权属单位</div>
<div class="t" style="left:2px;top:191px;line-height:14px">道路代码</div>
<div class="t" style="left:2px;top:203px;line-height:14px">建设年代</div>
<div class="t" style="left:2px;top:215px;line-height:14px">专业注记内容</div>
<div class="t" style="left:2px;top:227px;line-height:14px">专业注记<span class="ssl">X</span>座标</div>
<div class="t" style="left:2px;top:239px;line-height:14px">专业注记<span class="ssl">Y</span>座标</div>
<div class="t" style="left:2px;top:251px;line-height:14px">专业注记角度</div>
<div class="t" style="left:2px;top:263px;line-height:14px">线型码</div>
<div class="t" style="left:2px;top:275px;line-height:14px">图元标识码</div>
<div class="t" style="left:2px;top:287px;line-height:14px">辅助类型</div>
<div class="t" style="left:2px;top:299px;line-height:14px">删除标记</div>
<div class="t" style="left:2px;top:311px;line-height:14px">备注</div>
<div class="t" style="left:2px;top:323px;line-height:14px">上点管线高程</div>
<div class="t" style="left:2px;top:335px;line-height:14px">本点管线高程</div>
<div class="t" style="left:2px;top:347px;line-height:14px"><span class="ssl">LNUMBER</span></div>
<div class="a" style="left:179px;top:0;width:17px;height:360px;background:#f0f0f0"></div>
<div class="a" style="left:180px;top:0px;width:15px;height:16px;border:1px solid #a0a0a0;border-radius:2px;background:linear-gradient(90deg,#f6f6f6,#dcdcdc)"></div>
<svg style="left:184px;top:6px" width="7" height="4" viewBox="0 0 7 4"><path d="M0 4h7L3.500 0z" fill="#505050"/></svg>
<div class="a" style="left:180px;top:48px;width:15px;height:294px;border:1px solid #3c7fb1;border-radius:2px;background:linear-gradient(90deg,#e3f4fc 0%,#d0ecfa 45%,#a9dbf6 55%,#9cd3f0 100%)"></div>
<svg style="left:184px;top:190px" width="8" height="8" viewBox="0 0 8 8"><path d="M0 1.500h7M0 4h7M0 6.500h7" stroke="#2a5a8a" stroke-width="1"/></svg>
<div class="a" style="left:180px;top:343px;width:15px;height:16px;background:#f0f0f0"></div>
<svg style="left:184px;top:348px" width="7" height="4" viewBox="0 0 7 4"><path d="M0 0h7L3.500 4z" fill="#505050"/></svg>
</div>
<div class="a" style="left:1455px;top:954px;width:128px;height:30px;background:#fff;border:1px solid #c0c0c0;box-shadow:1px 1px 2px rgba(0,0,0,.15)"></div>
<svg style="left:1462px;top:983px" width="12" height="6" viewBox="0 0 12 6"><path d="M0 0l6 5.500L12 0" fill="#fff" stroke="#b0b0b0" stroke-width="1"/></svg>
<div class="t" style="left:1465px;top:961px;color:#333">个性设置，点我看看</div>
<div class="a" style="left:1460px;top:991px;width:202px;height:25px;background:#fff;border:1px solid #d8d8d8;border-radius:3px"></div>
<svg style="left:1454px;top:988px" width="30" height="30" viewBox="0 0 30 30"><path d="M2 7l20-5 6 19-20 6z" fill="#f0601c"/><path d="M20.500 8c-4-1.500-12-.5-12 2.800 0 3 11.500 1.500 11.800 5 .3 3-8 4-12.800 2" fill="none" stroke="#fff" stroke-width="3.200"/></svg>
<div class="t" style="left:1488px;top:996px;font-size:15px;font-weight:bold;color:#2a7acc;line-height:16px;height:16px">中</div>
<svg style="left:1508px;top:996px" width="152" height="18" viewBox="0 0 152 18"><g fill="none" stroke="#2a7acc" stroke-width="1.600"><circle cx="6" cy="5" r="1.800" stroke-width="1.200"/><path d="M12 7.500c1 2 0 4-1.500 5" stroke-width="2"/><circle cx="31.500" cy="8" r="7"/><path d="M28 10c2 2.500 5 2.500 7 0"/><path d="M29 5.500v2M34 5.500v2"/><rect x="50.500" y="1" width="5.500" height="10" rx="2.700" fill="#2a7acc"/><path d="M47.500 8c0 7 11.500 7 11.500 0M53.300 13v3.500M50 16.500h6.500"/><rect x="68" y="3.500" width="15" height="10" rx="1.500" fill="#2a7acc"/></g><path d="M70 6h1.500M73 6h1.500M76 6h1.500M79 6h1.500M70 8.500h1.500M73 8.500h1.500M76 8.500h1.500M79 8.500h1.500M71 11h9" stroke="#fff" stroke-width="1.200"/><g fill="#c0c8d0"><circle cx="98" cy="4.500" r="3"/><path d="M92 14c0-7 11-7 11 0v2H92z"/><rect x="99" y="10" width="6" height="6" fill="#e0e4e8" stroke="#a0a8b0" stroke-width=".6"/></g><path d="M112 5l4-3c1.500 1.500 4 1.500 5.500 0l4 3-2 3-1.500-1v9h-6.500v-9l-1.500 1z" fill="#2a7acc"/><g fill="#2a7acc"><rect x="134" y="3" width="5" height="5"/><rect x="140.500" y="3" width="5" height="5"/><rect x="134" y="9.500" width="5" height="5"/><rect x="140.500" y="9.500" width="5" height="5"/></g></svg>
</body></html>
